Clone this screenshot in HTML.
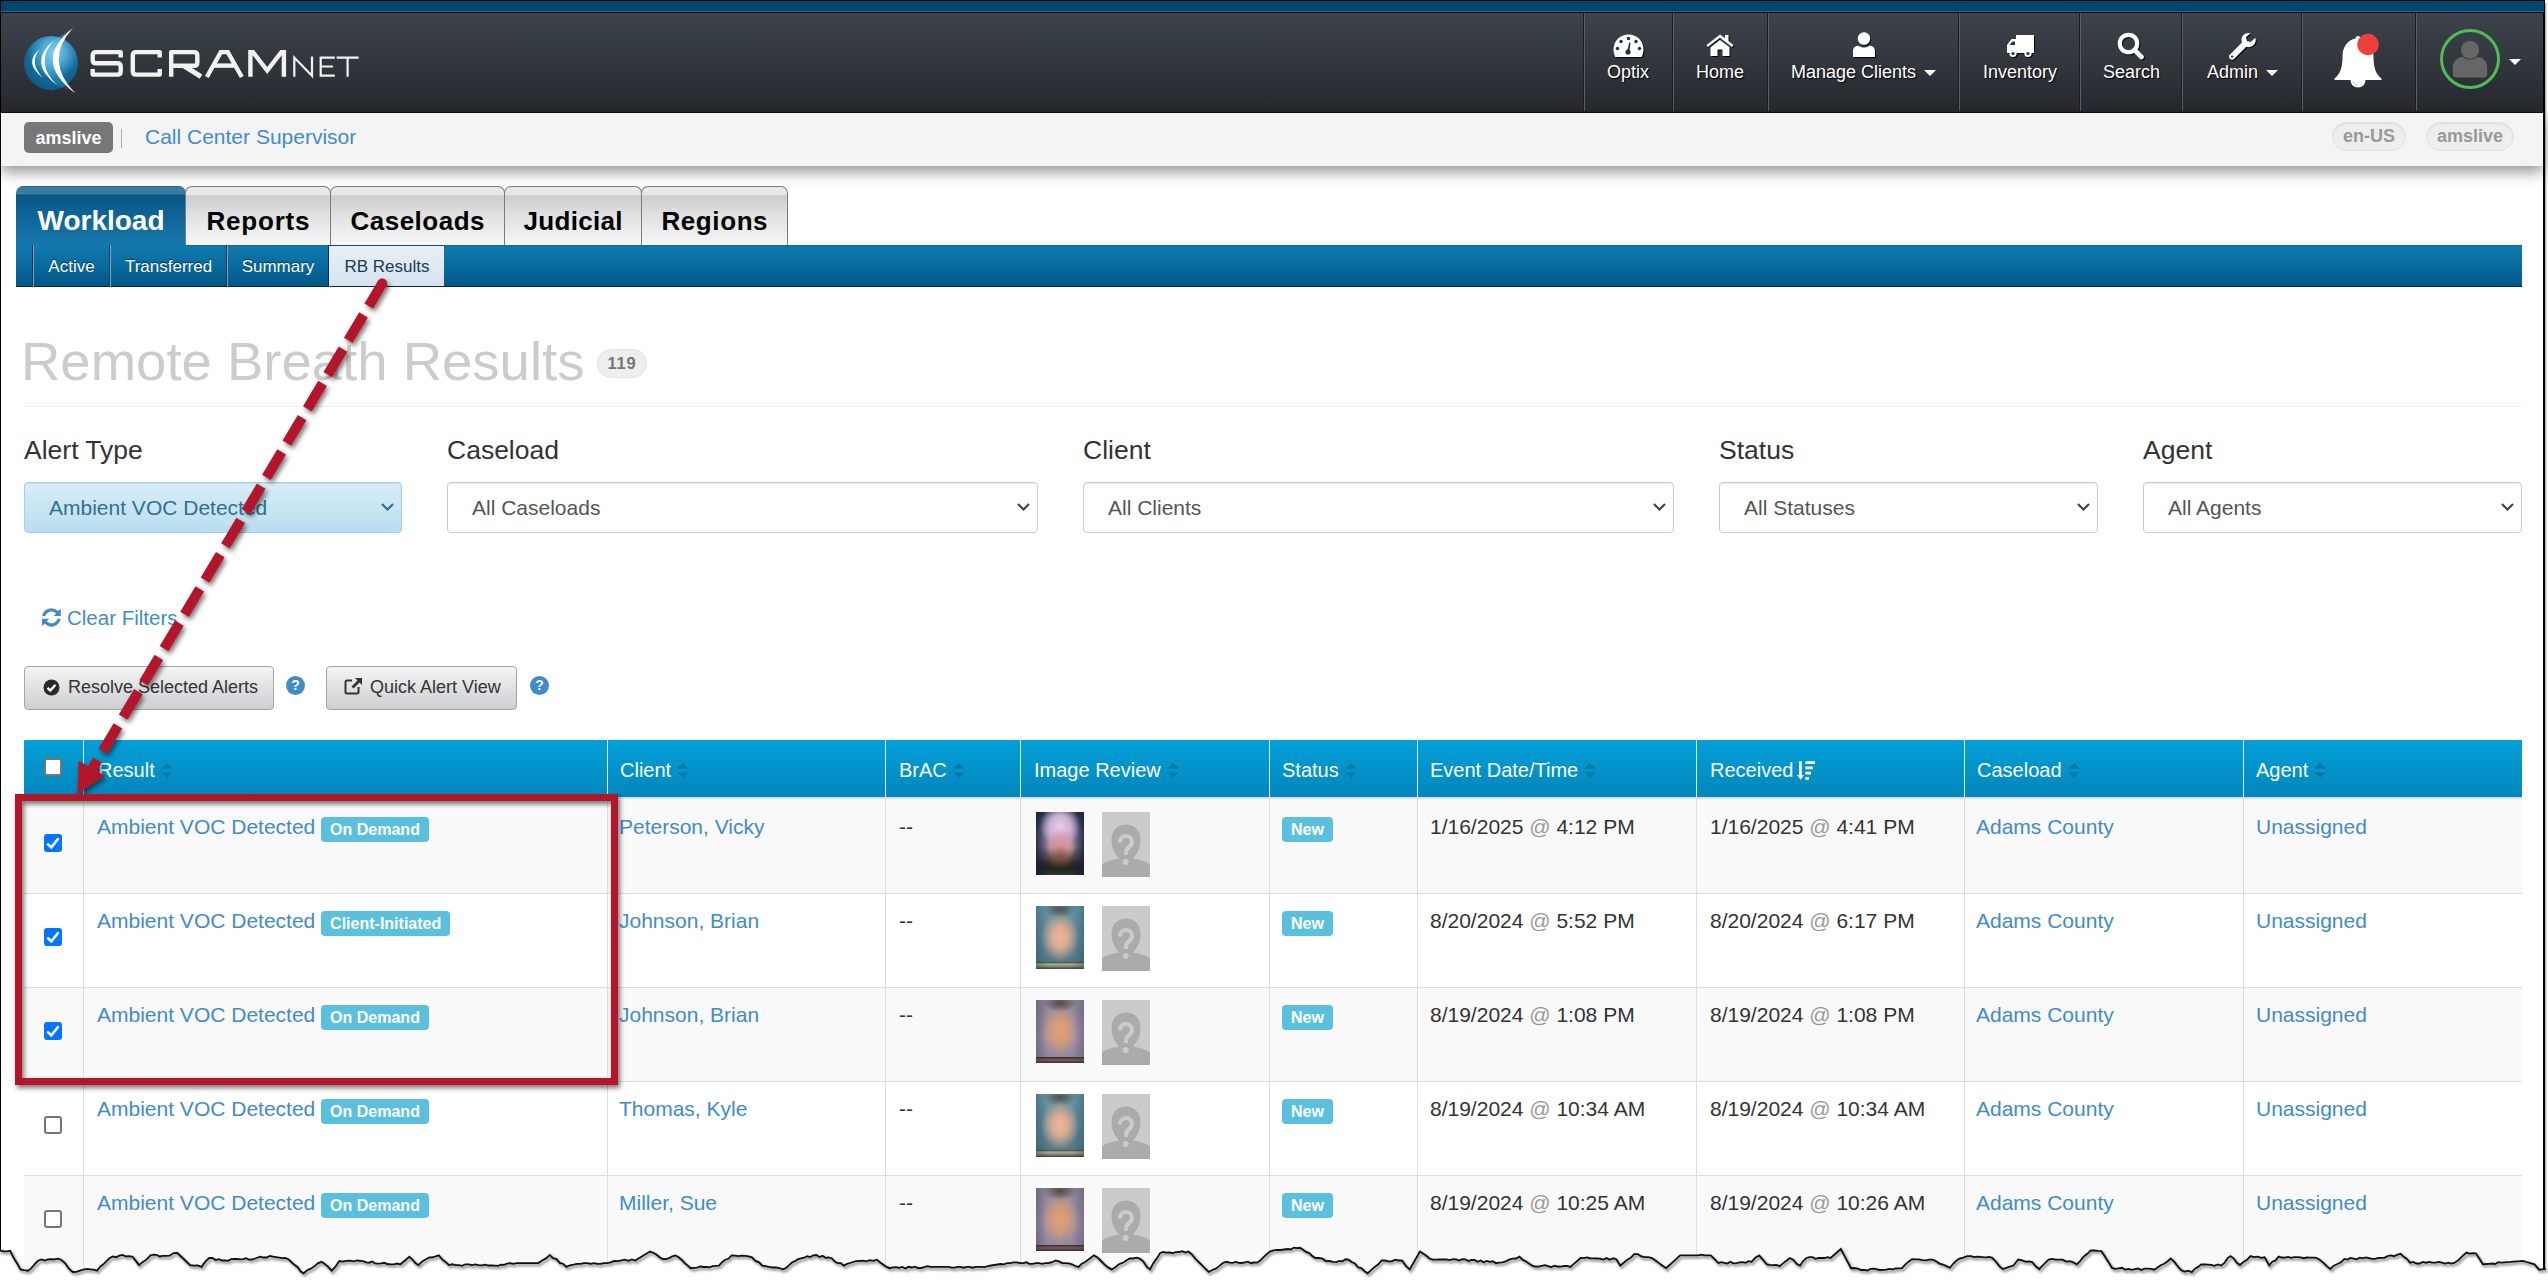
<!DOCTYPE html><html><head><meta charset="utf-8"><title>SCRAMNET</title><style>
*{box-sizing:border-box}
html,body{margin:0;padding:0}
body{width:2548px;height:1283px;position:relative;overflow:hidden;background:#fff;font-family:"Liberation Sans",sans-serif;color:#333}
.a{position:absolute}
.nw{white-space:nowrap}
.navtxt{position:absolute;color:#fff;font-size:18px;line-height:18px;white-space:nowrap;text-shadow:1px 1px 1px #000}
.navdiv{position:absolute;top:13px;height:98px;width:2px;border-left:1px solid #1b1d21;border-right:1px solid #5a5f66}
.caret{position:absolute;width:0;height:0;border-left:6px solid transparent;border-right:6px solid transparent;border-top:6px solid #fff}
.tab{position:absolute;top:186px;height:59px;border:1px solid #7c7c7c;border-bottom:none;border-radius:7px 7px 0 0;background:linear-gradient(#ececec 0,#e4e4e4 8px,#cdcdcd 9px,#e2e2e2 30px,#f7f7f7 58px);font-weight:bold;font-size:26px;color:#000;text-align:center;line-height:68px;white-space:nowrap}
.sub{position:absolute;top:245px;height:42px;color:#fff;font-size:17px;line-height:43px;text-align:center;white-space:nowrap;text-shadow:0 -1px 1px #03314f}
.sdiv{position:absolute;top:245px;height:42px;width:2px;border-left:1px solid #04304f;border-right:1px solid #6fadd2}
.lbl{position:absolute;top:435px;font-size:26.5px;line-height:30px;color:#333;white-space:nowrap}
.sel{position:absolute;top:482px;height:51px;border:1px solid #ccc;border-radius:4px;background:#fff;font-size:21px;line-height:49px;color:#555;padding-left:24px;white-space:nowrap;box-shadow:inset 0 1px 1px rgba(0,0,0,.075)}
.chev{position:absolute;top:20px;width:13px;height:8px}
.btn{position:absolute;top:666px;height:44px;border:1px solid #a6a6a6;border-radius:4px;background:linear-gradient(#f5f5f5,#e3e3e4 45%,#cdced2);font-size:18px;line-height:40px;color:#333;white-space:nowrap}
.help{position:absolute;top:676px;width:19px;height:19px;border-radius:50%;background:#428bca;color:#fff;font-weight:bold;font-size:14px;line-height:19px;text-align:center}
.th{position:absolute;top:741px;height:57px;color:#fff;font-size:20px;line-height:59px;white-space:nowrap}
.thd{position:absolute;top:740px;height:57px;width:1px;background:#d9eef7}
.sort{display:inline-block;vertical-align:baseline;margin-left:6px;width:12px;height:16px;position:relative;top:2px}
.row{position:absolute;left:24px;width:2498px;height:94px;border-top:1px solid #ddd}
.td{position:absolute;font-size:21px;line-height:24px;white-space:nowrap}
.lnk{color:#428bca}
.lab{display:inline-block;background:#5bc0de;color:#fff;font-weight:bold;font-size:16px;line-height:25px;height:25px;padding:0 9px;border-radius:4px;vertical-align:top;position:relative;top:2px}
.cb{position:absolute;left:20px;width:18px;height:18px;border-radius:3px}
.cbo{border:2px solid #767676;background:#fff}
.cbc{background:#0075ff}
.tdd{position:absolute;top:0;height:94px;width:1px;background:#ddd}
.photo{position:absolute;width:48px;height:63px}
.ph{position:absolute;width:48px;height:65px;background:#cbcbcb;overflow:hidden}
</style></head><body>
<div class="a" style="left:0;top:0;width:2545px;height:1px;background:#000"></div>
<div class="a" style="left:0;top:0;width:1px;height:1251px;background:#000"></div>
<div class="a" style="left:2543px;top:0;width:2px;height:1269px;background:#000"></div>
<div class="a" style="left:2545px;top:3px;width:3px;height:1267px;background:linear-gradient(90deg,#9a9a9a,#e6e6e6,#fff)"></div>
<div class="a" style="left:1px;top:1px;width:2543px;height:10px;background:#01466b"></div>
<div class="a" style="left:1px;top:11px;width:2543px;height:1px;background:#0a71a9"></div>
<div class="a" style="left:1px;top:12px;width:2542px;height:1px;background:#000"></div>
<div class="a" style="left:1px;top:13px;width:2542px;height:99px;background:linear-gradient(#3d434c,#33383f 45%,#25282d)"></div>
<div class="a" style="left:1px;top:112px;width:2542px;height:1px;background:#0b0c0e"></div>
<svg class="a" style="left:18px;top:24px" width="70" height="76" viewBox="0 0 70 76">
<defs><radialGradient id="gl" cx="0.55" cy="0.3" r="0.8"><stop offset="0" stop-color="#8fd0ec"/><stop offset="0.3" stop-color="#4ba5cf"/><stop offset="0.6" stop-color="#12699a"/><stop offset="1" stop-color="#0a5380"/></radialGradient>
<linearGradient id="gl2" x1="0" y1="0" x2="1" y2="1"><stop offset="0" stop-color="#64c9f2" stop-opacity="0.9"/><stop offset="1" stop-color="#64c9f2" stop-opacity="0"/></linearGradient></defs>
<circle cx="33" cy="39" r="27" fill="url(#gl)"/>
<path d="M35.7 16.6 Q8.8 39 39.4 61.5 L57.5 69.6 Q13.2 36.2 55 4Z" fill="url(#gl2)" opacity="0.6"/>
<path d="M55 4 Q13.2 36.2 57.5 69.6 Q25.2 36.2 55 4Z" fill="#fff"/>
<path d="M35.7 16.6 Q8.8 39 39.4 61.5 Q15.8 39 35.7 16.6Z" fill="#fff"/>
<path d="M22 25.3 Q4.7 38.4 25 54 Q10.3 38.4 22 25.3Z" fill="#fff"/>
</svg>
<svg class="a" style="left:0;top:0" width="380" height="100" viewBox="0 0 380 100"><g fill="none" stroke="#f2f2f2" stroke-width="4.4" stroke-linejoin="round">
<path d="M120.7 57.6 L120.7 52.1 L96 52.1 Q92.7 52.1 92.7 55.4 L92.7 60 Q92.7 63.3 96 63.3 L117.4 63.3 Q120.7 63.3 120.7 66.6 L120.7 71.3 Q120.7 74.6 117.4 74.6 L92.7 74.6 L92.7 69"/>
<path d="M159.7 57.6 L159.7 52.1 L136.1 52.1 Q132.8 52.1 132.8 55.4 L132.8 71.3 Q132.8 74.6 136.1 74.6 L159.7 74.6 L159.7 69"/>
<path d="M171.2 76.8 L171.2 52.1 L194 52.1 Q197.3 52.1 197.3 55.4 L197.3 62.5 Q197.3 65.8 194 65.8 L171.2 65.8"/><path d="M184 65.8 L201 76.6" stroke-width="5"/>
<path d="M206.8 77 L220.8 52.1 L227.8 52.1 L241.8 77" stroke-linejoin="miter"/><path d="M214.5 65.6 L234.2 65.6"/>
<path d="M250.4 76.8 L250.4 52.1 L253 52.1 L267.2 70.5 L281.4 52.1 L283.9 52.1 L283.9 76.8" stroke-linejoin="miter"/>
</g><g fill="none" stroke="#f2f2f2" stroke-width="2.2" stroke-linejoin="miter">
<path d="M294.3 76.8 L294.3 57.6 L312 75.8 L312 56.5"/>
<path d="M334.8 57.6 L320.7 57.6 L320.7 75.7 L334.8 75.7 M320.7 66.5 L333 66.5"/>
<path d="M336.6 57.6 L358.6 57.6 M347.6 57.6 L347.6 76.8"/>
</g></svg>
<div class="navdiv" style="left:1583px"></div>
<div class="navdiv" style="left:1672px"></div>
<div class="navdiv" style="left:1767px"></div>
<div class="navdiv" style="left:1958px"></div>
<div class="navdiv" style="left:2079px"></div>
<div class="navdiv" style="left:2181px"></div>
<div class="navdiv" style="left:2301px"></div>
<div class="navdiv" style="left:2415px"></div>
<svg class="a" style="left:1613px;top:34px;filter:drop-shadow(1px 1px 0.6px rgba(0,0,0,.9))" width="31" height="24" viewBox="0 0 31 24">
<path d="M15.5 0.5 C7 0.5 0.5 7 0.5 15.5 C0.5 18 1.2 20.5 2.3 23 L28.7 23 C29.8 20.5 30.5 18 30.5 15.5 C30.5 7 24 0.5 15.5 0.5Z" fill="#fff"/>
<g fill="#2b2f35"><circle cx="15.5" cy="4.5" r="1.7"/><circle cx="8" cy="7.5" r="1.7"/><circle cx="23" cy="7.5" r="1.7"/><circle cx="4.5" cy="14.5" r="1.7"/><circle cx="26.5" cy="14.5" r="1.7"/><circle cx="15" cy="18" r="2.6"/><path d="M14 17 L16.3 8.5 L17.6 8.8 L16.2 18Z"/></g></svg>
<svg class="a" style="left:1706px;top:34px;filter:drop-shadow(1px 1px 0.6px rgba(0,0,0,.9))" width="28" height="23" viewBox="0 0 28 23">
<path d="M14 0.5 L0.5 11 L2 13 L14 3.8 L26 13 L27.5 11 L22.5 7 L22.5 1 L19 1 L19 4.3Z" fill="#fff"/>
<path d="M14 6 L4.5 13.3 L4.5 22 L11.5 22 L11.5 15.5 L16.5 15.5 L16.5 22 L23.5 22 L23.5 13.3Z" fill="#fff"/></svg>
<svg class="a" style="left:1852px;top:32px;filter:drop-shadow(1px 1px 0.6px rgba(0,0,0,.9))" width="24" height="26" viewBox="0 0 24 26">
<circle cx="12" cy="6.5" r="6.3" fill="#fff"/><path d="M1 25 L1 19 C1 15.5 3.5 13.8 6.5 13.8 C8 15 10 15.6 12 15.6 C14 15.6 16 15 17.5 13.8 C20.5 13.8 23 15.5 23 19 L23 25Z" fill="#fff"/></svg>
<svg class="a" style="left:2006px;top:34px;filter:drop-shadow(1px 1px 0.6px rgba(0,0,0,.9))" width="29" height="24" viewBox="0 0 29 24">
<path d="M10 1 L28 1 L28 19 L1 19 L1 11 L5.5 5 L10 5Z" fill="#fff"/><path d="M3.5 11 L6.5 7.5 L9 7.5 L9 11Z" fill="#2e3238"/>
<circle cx="7" cy="19.5" r="3.6" fill="#fff"/><circle cx="7" cy="19.5" r="1.6" fill="#2e3238"/><circle cx="22" cy="19.5" r="3.6" fill="#fff"/><circle cx="22" cy="19.5" r="1.6" fill="#2e3238"/></svg>
<svg class="a" style="left:2117px;top:32px;filter:drop-shadow(1px 1px 0.6px rgba(0,0,0,.9))" width="29" height="28" viewBox="0 0 29 28">
<circle cx="11.5" cy="11.5" r="8.7" fill="none" stroke="#fff" stroke-width="4.2"/><path d="M17.5 18 L24.5 25" stroke="#fff" stroke-width="4.6" stroke-linecap="round"/></svg>
<svg class="a" style="left:2228px;top:32px;filter:drop-shadow(1px 1px 0.6px rgba(0,0,0,.9))" width="29" height="28" viewBox="0 0 29 28">
<path d="M20.5 1 C16.5 1 13.5 4 13.5 8 C13.5 9 13.7 9.8 14 10.6 L2 22.5 C0.8 23.7 0.8 25.6 2 26.8 C3.2 28 5.1 28 6.3 26.8 L18.3 14.8 C19 15.1 19.8 15.2 20.6 15.2 C24.6 15.2 27.7 12 27.7 8.1 C27.7 7.2 27.5 6.4 27.3 5.7 L22.8 10 L19 9 L18 5.2 L22.5 1.2 C21.8 1.1 21.2 1 20.5 1Z" fill="#fff"/><circle cx="4.2" cy="24.6" r="1.2" fill="#2e3238"/></svg>
<svg class="a" style="left:2330px;top:32px" width="56" height="58" viewBox="0 0 56 58">
<g style="filter:drop-shadow(0.5px 0.5px 0.5px rgba(0,0,0,.6))"><path d="M28 4 C26.3 4 25.5 5 25.5 6.5 C17.5 8 12.5 15 12.5 24 C12.5 36 10 42 5 46 C3.5 47.5 4.5 48 6 48 L50 48 C51.5 48 52.5 47.5 51 46 C46 42 43.5 36 43.5 24 C43.5 15 38.5 8 30.5 6.5 C30.5 5 29.7 4 28 4Z" fill="#fff"/>
<path d="M20.5 48 C20.5 52.5 23.8 55.5 28 55.5 C32.2 55.5 35.5 52.5 35.5 48Z" fill="#fff"/><path d="M23 49.5 C23.5 52 25.5 53.5 28 53.8" fill="none" stroke="#9aa" stroke-width="0.8"/></g>
<circle cx="38" cy="12.5" r="10.7" fill="#f0403b"/></svg>
<svg class="a" style="left:2438px;top:27px" width="64" height="64" viewBox="0 0 64 64">
<circle cx="32" cy="32" r="28.5" fill="none" stroke="#52bb55" stroke-width="3"/>
<circle cx="32" cy="22.8" r="9.1" fill="#666"/><path d="M14.8 47 L14.8 41 C14.8 34 19 30 25 30 C27 31.8 29.3 32.6 32 32.6 C34.7 32.6 37 31.8 39 30 C45 30 49.2 34 49.2 41 L49.2 47 C49.2 49 48 50.4 46 50.4 L18 50.4 C16 50.4 14.8 49 14.8 47Z" fill="#666"/></svg>
<div class="navtxt" style="left:1607px;top:63px">Optix</div>
<div class="navtxt" style="left:1696px;top:63px">Home</div>
<div class="navtxt" style="left:1791px;top:63px">Manage Clients</div>
<div class="navtxt" style="left:1983px;top:63px">Inventory</div>
<div class="navtxt" style="left:2103px;top:63px">Search</div>
<div class="navtxt" style="left:2207px;top:63px">Admin</div>
<div class="caret" style="left:1924px;top:70px"></div>
<div class="caret" style="left:2266px;top:70px"></div>
<div class="caret" style="left:2509px;top:59px"></div>
<div class="a" style="left:1px;top:113px;width:2542px;height:53px;background:#f4f4f4;box-shadow:0 6px 14px rgba(0,0,0,.42);z-index:2"></div>
<div class="a" style="left:24px;top:122px;width:89px;height:31px;background:#777;border-radius:5px;color:#fff;font-weight:bold;font-size:18px;line-height:33px;text-align:center;z-index:3">amslive</div>
<div class="a" style="left:121px;top:129px;width:1px;height:19px;background:#aaa;z-index:3"></div>
<div class="a nw" style="left:145px;top:124px;font-size:21px;line-height:26px;color:#428bca;z-index:3">Call Center Supervisor</div>
<div class="a" style="left:2332px;top:122px;width:74px;height:29px;background:#eee;border:1px solid #e2e2e2;border-radius:15px;box-shadow:inset 0 1px 2px rgba(0,0,0,.08);color:#999;font-weight:bold;font-size:18px;line-height:27px;text-align:center;z-index:3">en-US</div>
<div class="a" style="left:2426px;top:122px;width:88px;height:29px;background:#eee;border:1px solid #e2e2e2;border-radius:15px;box-shadow:inset 0 1px 2px rgba(0,0,0,.08);color:#999;font-weight:bold;font-size:18px;line-height:27px;text-align:center;z-index:3">amslive</div>
<div class="a" style="left:16px;top:186px;width:170px;height:60px;border-radius:7px 7px 0 0;background:linear-gradient(#0b4d74 0,#3b7ea3 1px,#3a7b9f 8px,#0a5682 9px,#0d6193 25px,#1677ab 59px);color:#fff;font-weight:bold;font-size:28px;line-height:70px;text-align:center;padding-right:0px">Workload</div>
<div class="tab" style="left:185px;width:146px;letter-spacing:0.8px;text-indent:0.8px">Reports</div>
<div class="tab" style="left:330px;width:175px;letter-spacing:0.5px;text-indent:0.5px">Caseloads</div>
<div class="tab" style="left:504px;width:138px;letter-spacing:0.3px;text-indent:0.3px">Judicial</div>
<div class="tab" style="left:641px;width:147px;letter-spacing:0.6px;text-indent:0.6px">Regions</div>
<div class="a" style="left:16px;top:245px;width:2506px;height:42px;background:linear-gradient(#0b68a0 0,#1079ab 2px,#0a6c9f 45%,#025a89 92%,#02507c)"></div>
<div class="a" style="left:16px;top:286px;width:2506px;height:1px;background:#022a45"></div><div class="a" style="left:16px;top:245px;width:169px;height:2px;background:#1179ac"></div>
<div class="sdiv" style="left:32px"></div>
<div class="sdiv" style="left:109px"></div>
<div class="sdiv" style="left:226px"></div>
<div class="sdiv" style="left:328px"></div>
<div class="a" style="left:329px;top:245px;width:115px;height:41px;background:linear-gradient(#e8eff6,#d6e3ef);border-top:1px solid #0a4c74"></div>
<div class="sub" style="left:34px;width:75px">Active</div>
<div class="sub" style="left:111px;width:115px">Transferred</div>
<div class="sub" style="left:228px;width:100px">Summary</div>
<div class="sub" style="left:330px;width:114px;color:#203a52;text-shadow:none">RB Results</div>
<div class="a nw" style="left:21px;top:332px;font-size:54.5px;line-height:60px;color:#ccc">Remote Breath Results</div>
<div class="a" style="left:597px;top:349px;width:50px;height:29px;background:#eee;border:1px solid #e3e3e3;border-radius:14px;color:#777;font-weight:bold;font-size:16.5px;letter-spacing:0.8px;line-height:27px;text-align:center">119</div>
<div class="a" style="left:24px;top:406px;width:2498px;height:1px;background:#eee"></div>
<div class="lbl" style="left:24px">Alert Type</div>
<div class="lbl" style="left:447px">Caseload</div>
<div class="lbl" style="left:1083px">Client</div>
<div class="lbl" style="left:1719px">Status</div>
<div class="lbl" style="left:2143px">Agent</div>
<div class="sel" style="left:24px;width:378px;border-color:#9fd1ea;background:linear-gradient(#d9edf7,#b9def0);color:#31708f">Ambient VOC Detected<svg class="chev" style="right:7px" viewBox="0 0 13 8"><path d="M1 1 L6.5 6.5 L12 1" fill="none" stroke="#31708f" stroke-width="2.2"/></svg></div>
<div class="sel" style="left:447px;width:591px">All Caseloads<svg class="chev" style="right:7px" viewBox="0 0 13 8"><path d="M1 1 L6.5 6.5 L12 1" fill="none" stroke="#444" stroke-width="2.2"/></svg></div>
<div class="sel" style="left:1083px;width:591px">All Clients<svg class="chev" style="right:7px" viewBox="0 0 13 8"><path d="M1 1 L6.5 6.5 L12 1" fill="none" stroke="#444" stroke-width="2.2"/></svg></div>
<div class="sel" style="left:1719px;width:379px">All Statuses<svg class="chev" style="right:7px" viewBox="0 0 13 8"><path d="M1 1 L6.5 6.5 L12 1" fill="none" stroke="#444" stroke-width="2.2"/></svg></div>
<div class="sel" style="left:2143px;width:379px">All Agents<svg class="chev" style="right:7px" viewBox="0 0 13 8"><path d="M1 1 L6.5 6.5 L12 1" fill="none" stroke="#444" stroke-width="2.2"/></svg></div>
<svg class="a" style="left:42px;top:608px" width="19" height="19" viewBox="0 0 19 19"><g fill="#428bca">
<path d="M0.2 8 A9.3 9.3 0 0 1 16 3 L18.8 0.8 L18.8 8 L11.8 8 L14 5.6 A6.2 6.2 0 0 0 3.4 8 Z"/>
<path d="M18.6 10.8 A9.3 9.3 0 0 1 2.8 15.8 L0 18 L0 10.8 L7 10.8 L4.8 13.2 A6.2 6.2 0 0 0 15.4 10.8 Z"/></g></svg>
<div class="a nw" style="left:67px;top:606px;font-size:20.5px;line-height:24px;color:#428bca">Clear Filters</div>
<div class="btn" style="left:24px;width:250px"><svg class="a" style="left:18px;top:12px" width="17" height="17" viewBox="0 0 17 17"><circle cx="8.5" cy="8.5" r="8" fill="#2a2a2a"/><path d="M4.5 8.8 L7.3 11.5 L12.5 5.8" fill="none" stroke="#fff" stroke-width="2.3"/></svg><span class="a" style="left:43px;top:0">Resolve Selected Alerts</span></div>
<div class="btn" style="left:326px;width:191px"><svg class="a" style="left:17px;top:10px" width="19" height="18" viewBox="0 0 19 18"><path d="M8 3.5 L3 3.5 C2 3.5 1.5 4 1.5 5 L1.5 15 C1.5 16 2 16.5 3 16.5 L13 16.5 C14 16.5 14.5 16 14.5 15 L14.5 10" fill="none" stroke="#333" stroke-width="2"/><path d="M11 1 L18 1 L18 8 L15.5 5.5 L9.5 11.5 L7.5 9.5 L13.5 3.5Z" fill="#333"/></svg><span class="a" style="left:43px;top:0">Quick Alert View</span></div>
<div class="help" style="left:286px">?</div>
<div class="help" style="left:530px">?</div>
<div class="a" style="left:24px;top:740px;width:2498px;height:57px;background:linear-gradient(#03a0d9,#0386bb)"></div>
<div class="a" style="left:24px;top:797px;width:2498px;height:2px;background:#ddd"></div>
<div class="thd" style="left:83px"></div>
<div class="thd" style="left:607px"></div>
<div class="thd" style="left:885px"></div>
<div class="thd" style="left:1020px"></div>
<div class="thd" style="left:1269px"></div>
<div class="thd" style="left:1417px"></div>
<div class="thd" style="left:1696px"></div>
<div class="thd" style="left:1964px"></div>
<div class="thd" style="left:2243px"></div>
<div class="th" style="left:98px">Result<svg class="sort" viewBox="0 0 11 15"><path d="M5.5 0 L11 5.5 L0 5.5Z M0 9 L11 9 L5.5 14.5Z" fill="#0377a0"/><path d="M0.5 9.6 L5.5 14.6 L10.5 9.6 M0.3 6.2 L10.7 6.2" fill="none" stroke="#08a0da" stroke-width="0.8" opacity="0.7"/></svg></div>
<div class="th" style="left:620px">Client<svg class="sort" viewBox="0 0 11 15"><path d="M5.5 0 L11 5.5 L0 5.5Z M0 9 L11 9 L5.5 14.5Z" fill="#0377a0"/><path d="M0.5 9.6 L5.5 14.6 L10.5 9.6 M0.3 6.2 L10.7 6.2" fill="none" stroke="#08a0da" stroke-width="0.8" opacity="0.7"/></svg></div>
<div class="th" style="left:899px">BrAC<svg class="sort" viewBox="0 0 11 15"><path d="M5.5 0 L11 5.5 L0 5.5Z M0 9 L11 9 L5.5 14.5Z" fill="#0377a0"/><path d="M0.5 9.6 L5.5 14.6 L10.5 9.6 M0.3 6.2 L10.7 6.2" fill="none" stroke="#08a0da" stroke-width="0.8" opacity="0.7"/></svg></div>
<div class="th" style="left:1034px">Image Review<svg class="sort" viewBox="0 0 11 15"><path d="M5.5 0 L11 5.5 L0 5.5Z M0 9 L11 9 L5.5 14.5Z" fill="#0377a0"/><path d="M0.5 9.6 L5.5 14.6 L10.5 9.6 M0.3 6.2 L10.7 6.2" fill="none" stroke="#08a0da" stroke-width="0.8" opacity="0.7"/></svg></div>
<div class="th" style="left:1282px">Status<svg class="sort" viewBox="0 0 11 15"><path d="M5.5 0 L11 5.5 L0 5.5Z M0 9 L11 9 L5.5 14.5Z" fill="#0377a0"/><path d="M0.5 9.6 L5.5 14.6 L10.5 9.6 M0.3 6.2 L10.7 6.2" fill="none" stroke="#08a0da" stroke-width="0.8" opacity="0.7"/></svg></div>
<div class="th" style="left:1430px">Event Date/Time<svg class="sort" viewBox="0 0 11 15"><path d="M5.5 0 L11 5.5 L0 5.5Z M0 9 L11 9 L5.5 14.5Z" fill="#0377a0"/><path d="M0.5 9.6 L5.5 14.6 L10.5 9.6 M0.3 6.2 L10.7 6.2" fill="none" stroke="#08a0da" stroke-width="0.8" opacity="0.7"/></svg></div>
<div class="th" style="left:1977px">Caseload<svg class="sort" viewBox="0 0 11 15"><path d="M5.5 0 L11 5.5 L0 5.5Z M0 9 L11 9 L5.5 14.5Z" fill="#0377a0"/><path d="M0.5 9.6 L5.5 14.6 L10.5 9.6 M0.3 6.2 L10.7 6.2" fill="none" stroke="#08a0da" stroke-width="0.8" opacity="0.7"/></svg></div>
<div class="th" style="left:2256px">Agent<svg class="sort" viewBox="0 0 11 15"><path d="M5.5 0 L11 5.5 L0 5.5Z M0 9 L11 9 L5.5 14.5Z" fill="#0377a0"/><path d="M0.5 9.6 L5.5 14.6 L10.5 9.6 M0.3 6.2 L10.7 6.2" fill="none" stroke="#08a0da" stroke-width="0.8" opacity="0.7"/></svg></div>
<div class="th" style="left:1710px">Received<svg class="sort" viewBox="0 0 20 20" style="width:20px;height:20px;margin-left:3px;top:3px"><path d="M4.4 1.3 L4.4 16" stroke="#fff" stroke-width="2.8" fill="none"/><path d="M1 15 L8 15 L4.5 19.8Z" fill="#fff"/><path d="M9.3 2.7 L18.9 2.7 M9.3 7.9 L16.9 7.9 M9.3 13.2 L15 13.2 M9.3 18.4 L13 18.4" stroke="#fff" stroke-width="2.8"/></svg></div>
<div class="a" style="left:44px;top:758px;width:18px;height:18px;border:2px solid #767676;border-radius:3px;background:#fff"></div>
<div class="a" style="left:24px;top:799px;width:2498px;height:94px;background:#f9f9f9">
<div class="tdd" style="left:59px"></div>
<div class="tdd" style="left:583px"></div>
<div class="tdd" style="left:861px"></div>
<div class="tdd" style="left:996px"></div>
<div class="tdd" style="left:1245px"></div>
<div class="tdd" style="left:1393px"></div>
<div class="tdd" style="left:1672px"></div>
<div class="tdd" style="left:1940px"></div>
<div class="tdd" style="left:2219px"></div>
<div class="a" style="left:0;top:0;width:2498px;height:94px;transform:translateY(0px)">
<div class="cb cbc" style="top:35px"><svg width="18" height="18" viewBox="0 0 18 18"><path d="M3.2 9.6 L7.3 13.3 L14.6 4.3" fill="none" stroke="#fff" stroke-width="2.6"/></svg></div>
<div class="td lnk" style="left:73px;top:16px">Ambient VOC Detected <span class="lab">On Demand</span></div>
<div class="td lnk" style="left:595px;top:16px">Peterson, Vicky</div>
<div class="td" style="left:875px;top:16px">--</div>
<div class="photo" style="left:1012px;top:13px;background:radial-gradient(ellipse 14px 12px at 24px 45px,rgba(130,80,60,.9),rgba(130,80,60,0) 100%),radial-gradient(ellipse 16px 16px at 25px 33px,#d9959a 0%,rgba(215,150,160,.85) 45%,rgba(200,150,190,0) 100%),radial-gradient(ellipse 20px 22px at 24px 14px,#e8cbe6 0%,rgba(215,185,220,.9) 50%,rgba(160,140,190,0) 100%),linear-gradient(90deg,rgba(20,30,50,.85),rgba(20,30,50,0) 30%,rgba(20,30,50,0) 70%,rgba(20,30,50,.85)),linear-gradient(#2f3a4e,#9d8fb8 30%,#a78aa8 55%,#3a3030 80%,#22251f 90%,#2d3a2c);background-size:100% 100%,100% 100%,100% 100%,100% 100%,100% 100%"></div>
<div class="ph" style="left:1078px;top:13px"><svg width="48" height="65" viewBox="0 0 48 65"><path d="M24 12.5 C15 12.5 9.5 19 9.5 28 C9.5 36 13 42 17 46.5 C8 48 0 51 0 53 L0 65 L48 65 L48 53 C48 51 40 48 31 46.5 C35 42 38.5 36 38.5 28 C38.5 19 33 12.5 24 12.5Z" fill="#ababab"/><path d="M18 30.5 C18 26.5 20.5 24 24 24 C27.5 24 30 26.5 30 30 C30 33.5 27 35 25.5 36.5 C24.5 37.5 24 39 24 43" fill="none" stroke="#cbcbcb" stroke-width="4.2"/><circle cx="23.8" cy="50" r="2.9" fill="#cbcbcb"/></svg></div>
<div class="td" style="left:1258px;top:16px"><span class="lab">New</span></div>
<div class="td" style="left:1406px;top:16px">1/16/2025 <span style="color:#999">@</span> 4:12 PM</div>
<div class="td" style="left:1686px;top:16px">1/16/2025 <span style="color:#999">@</span> 4:41 PM</div>
<div class="td lnk" style="left:1952px;top:16px">Adams County</div>
<div class="td lnk" style="left:2232px;top:16px">Unassigned</div>
</div></div>
<div class="a" style="left:24px;top:893px;width:2498px;height:94px;background:#fff;border-top:1px solid #ddd">
<div class="tdd" style="left:59px"></div>
<div class="tdd" style="left:583px"></div>
<div class="tdd" style="left:861px"></div>
<div class="tdd" style="left:996px"></div>
<div class="tdd" style="left:1245px"></div>
<div class="tdd" style="left:1393px"></div>
<div class="tdd" style="left:1672px"></div>
<div class="tdd" style="left:1940px"></div>
<div class="tdd" style="left:2219px"></div>
<div class="a" style="left:0;top:0;width:2498px;height:94px;transform:translateY(0px)">
<div class="cb cbc" style="top:34px"><svg width="18" height="18" viewBox="0 0 18 18"><path d="M3.2 9.6 L7.3 13.3 L14.6 4.3" fill="none" stroke="#fff" stroke-width="2.6"/></svg></div>
<div class="td lnk" style="left:73px;top:15px">Ambient VOC Detected <span class="lab">Client-Initiated</span></div>
<div class="td lnk" style="left:595px;top:15px">Johnson, Brian</div>
<div class="td" style="left:875px;top:15px">--</div>
<div class="photo" style="left:1012px;top:12px;background:radial-gradient(ellipse 17px 9px at 24px 3px,rgba(70,60,45,.75),rgba(70,60,45,0)),radial-gradient(ellipse 19px 25px at 24px 31px,#e9b89e 0%,#dcab92 40%,rgba(150,150,140,0) 100%),linear-gradient(90deg,rgba(30,60,80,.35),rgba(30,60,80,0) 25%,rgba(30,60,80,0) 75%,rgba(30,60,80,.35)),linear-gradient(#34402f 0,#a9ae94 2px,#8b917a 4px,#3c4636 7px),linear-gradient(#6a98a6,#5d8796 60%,#4f7180);background-size:100% 100%,100% 100%,100% 100%,100% 7px,100% 100%;background-position:0 0,0 0,0 0,0 bottom,0 0;background-repeat:no-repeat"></div>
<div class="ph" style="left:1078px;top:12px"><svg width="48" height="65" viewBox="0 0 48 65"><path d="M24 12.5 C15 12.5 9.5 19 9.5 28 C9.5 36 13 42 17 46.5 C8 48 0 51 0 53 L0 65 L48 65 L48 53 C48 51 40 48 31 46.5 C35 42 38.5 36 38.5 28 C38.5 19 33 12.5 24 12.5Z" fill="#ababab"/><path d="M18 30.5 C18 26.5 20.5 24 24 24 C27.5 24 30 26.5 30 30 C30 33.5 27 35 25.5 36.5 C24.5 37.5 24 39 24 43" fill="none" stroke="#cbcbcb" stroke-width="4.2"/><circle cx="23.8" cy="50" r="2.9" fill="#cbcbcb"/></svg></div>
<div class="td" style="left:1258px;top:15px"><span class="lab">New</span></div>
<div class="td" style="left:1406px;top:15px">8/20/2024 <span style="color:#999">@</span> 5:52 PM</div>
<div class="td" style="left:1686px;top:15px">8/20/2024 <span style="color:#999">@</span> 6:17 PM</div>
<div class="td lnk" style="left:1952px;top:15px">Adams County</div>
<div class="td lnk" style="left:2232px;top:15px">Unassigned</div>
</div></div>
<div class="a" style="left:24px;top:987px;width:2498px;height:94px;background:#f9f9f9;border-top:1px solid #ddd">
<div class="tdd" style="left:59px"></div>
<div class="tdd" style="left:583px"></div>
<div class="tdd" style="left:861px"></div>
<div class="tdd" style="left:996px"></div>
<div class="tdd" style="left:1245px"></div>
<div class="tdd" style="left:1393px"></div>
<div class="tdd" style="left:1672px"></div>
<div class="tdd" style="left:1940px"></div>
<div class="tdd" style="left:2219px"></div>
<div class="a" style="left:0;top:0;width:2498px;height:94px;transform:translateY(0px)">
<div class="cb cbc" style="top:34px"><svg width="18" height="18" viewBox="0 0 18 18"><path d="M3.2 9.6 L7.3 13.3 L14.6 4.3" fill="none" stroke="#fff" stroke-width="2.6"/></svg></div>
<div class="td lnk" style="left:73px;top:15px">Ambient VOC Detected <span class="lab">On Demand</span></div>
<div class="td lnk" style="left:595px;top:15px">Johnson, Brian</div>
<div class="td" style="left:875px;top:15px">--</div>
<div class="photo" style="left:1012px;top:12px;background:radial-gradient(ellipse 17px 9px at 24px 3px,rgba(70,55,45,.8),rgba(70,55,45,0)),radial-gradient(ellipse 19px 26px at 24px 31px,#dda078 0%,#d49a78 40%,rgba(150,130,150,0) 100%),linear-gradient(90deg,rgba(60,40,60,.35),rgba(60,40,60,0) 25%,rgba(60,40,60,0) 75%,rgba(60,40,60,.3)),linear-gradient(#3a2626 0,#7a6060 3px,#3d2929 6px),linear-gradient(#8e879c,#9b93ad 60%,#8d839e);background-size:100% 100%,100% 100%,100% 100%,100% 6px,100% 100%;background-position:0 0,0 0,0 0,0 bottom,0 0;background-repeat:no-repeat"></div>
<div class="ph" style="left:1078px;top:12px"><svg width="48" height="65" viewBox="0 0 48 65"><path d="M24 12.5 C15 12.5 9.5 19 9.5 28 C9.5 36 13 42 17 46.5 C8 48 0 51 0 53 L0 65 L48 65 L48 53 C48 51 40 48 31 46.5 C35 42 38.5 36 38.5 28 C38.5 19 33 12.5 24 12.5Z" fill="#ababab"/><path d="M18 30.5 C18 26.5 20.5 24 24 24 C27.5 24 30 26.5 30 30 C30 33.5 27 35 25.5 36.5 C24.5 37.5 24 39 24 43" fill="none" stroke="#cbcbcb" stroke-width="4.2"/><circle cx="23.8" cy="50" r="2.9" fill="#cbcbcb"/></svg></div>
<div class="td" style="left:1258px;top:15px"><span class="lab">New</span></div>
<div class="td" style="left:1406px;top:15px">8/19/2024 <span style="color:#999">@</span> 1:08 PM</div>
<div class="td" style="left:1686px;top:15px">8/19/2024 <span style="color:#999">@</span> 1:08 PM</div>
<div class="td lnk" style="left:1952px;top:15px">Adams County</div>
<div class="td lnk" style="left:2232px;top:15px">Unassigned</div>
</div></div>
<div class="a" style="left:24px;top:1081px;width:2498px;height:94px;background:#fff;border-top:1px solid #ddd">
<div class="tdd" style="left:59px"></div>
<div class="tdd" style="left:583px"></div>
<div class="tdd" style="left:861px"></div>
<div class="tdd" style="left:996px"></div>
<div class="tdd" style="left:1245px"></div>
<div class="tdd" style="left:1393px"></div>
<div class="tdd" style="left:1672px"></div>
<div class="tdd" style="left:1940px"></div>
<div class="tdd" style="left:2219px"></div>
<div class="a" style="left:0;top:0;width:2498px;height:94px;transform:translateY(0px)">
<div class="cb cbo" style="top:34px"></div>
<div class="td lnk" style="left:73px;top:15px">Ambient VOC Detected <span class="lab">On Demand</span></div>
<div class="td lnk" style="left:595px;top:15px">Thomas, Kyle</div>
<div class="td" style="left:875px;top:15px">--</div>
<div class="photo" style="left:1012px;top:12px;background:radial-gradient(ellipse 17px 9px at 24px 3px,rgba(70,60,45,.75),rgba(70,60,45,0)),radial-gradient(ellipse 19px 25px at 24px 31px,#e9b89e 0%,#dcab92 40%,rgba(150,150,140,0) 100%),linear-gradient(90deg,rgba(30,60,80,.35),rgba(30,60,80,0) 25%,rgba(30,60,80,0) 75%,rgba(30,60,80,.35)),linear-gradient(#34402f 0,#a9ae94 2px,#8b917a 4px,#3c4636 7px),linear-gradient(#6a98a6,#5d8796 60%,#4f7180);background-size:100% 100%,100% 100%,100% 100%,100% 7px,100% 100%;background-position:0 0,0 0,0 0,0 bottom,0 0;background-repeat:no-repeat"></div>
<div class="ph" style="left:1078px;top:12px"><svg width="48" height="65" viewBox="0 0 48 65"><path d="M24 12.5 C15 12.5 9.5 19 9.5 28 C9.5 36 13 42 17 46.5 C8 48 0 51 0 53 L0 65 L48 65 L48 53 C48 51 40 48 31 46.5 C35 42 38.5 36 38.5 28 C38.5 19 33 12.5 24 12.5Z" fill="#ababab"/><path d="M18 30.5 C18 26.5 20.5 24 24 24 C27.5 24 30 26.5 30 30 C30 33.5 27 35 25.5 36.5 C24.5 37.5 24 39 24 43" fill="none" stroke="#cbcbcb" stroke-width="4.2"/><circle cx="23.8" cy="50" r="2.9" fill="#cbcbcb"/></svg></div>
<div class="td" style="left:1258px;top:15px"><span class="lab">New</span></div>
<div class="td" style="left:1406px;top:15px">8/19/2024 <span style="color:#999">@</span> 10:34 AM</div>
<div class="td" style="left:1686px;top:15px">8/19/2024 <span style="color:#999">@</span> 10:34 AM</div>
<div class="td lnk" style="left:1952px;top:15px">Adams County</div>
<div class="td lnk" style="left:2232px;top:15px">Unassigned</div>
</div></div>
<div class="a" style="left:24px;top:1175px;width:2498px;height:94px;background:#f9f9f9;border-top:1px solid #ddd">
<div class="tdd" style="left:59px"></div>
<div class="tdd" style="left:583px"></div>
<div class="tdd" style="left:861px"></div>
<div class="tdd" style="left:996px"></div>
<div class="tdd" style="left:1245px"></div>
<div class="tdd" style="left:1393px"></div>
<div class="tdd" style="left:1672px"></div>
<div class="tdd" style="left:1940px"></div>
<div class="tdd" style="left:2219px"></div>
<div class="a" style="left:0;top:0;width:2498px;height:94px;transform:translateY(0px)">
<div class="cb cbo" style="top:34px"></div>
<div class="td lnk" style="left:73px;top:15px">Ambient VOC Detected <span class="lab">On Demand</span></div>
<div class="td lnk" style="left:595px;top:15px">Miller, Sue</div>
<div class="td" style="left:875px;top:15px">--</div>
<div class="photo" style="left:1012px;top:12px;background:radial-gradient(ellipse 17px 9px at 24px 3px,rgba(70,55,45,.8),rgba(70,55,45,0)),radial-gradient(ellipse 19px 26px at 24px 31px,#dda078 0%,#d49a78 40%,rgba(150,130,150,0) 100%),linear-gradient(90deg,rgba(60,40,60,.35),rgba(60,40,60,0) 25%,rgba(60,40,60,0) 75%,rgba(60,40,60,.3)),linear-gradient(#3a2626 0,#7a6060 3px,#3d2929 6px),linear-gradient(#8e879c,#9b93ad 60%,#8d839e);background-size:100% 100%,100% 100%,100% 100%,100% 6px,100% 100%;background-position:0 0,0 0,0 0,0 bottom,0 0;background-repeat:no-repeat"></div>
<div class="ph" style="left:1078px;top:12px"><svg width="48" height="65" viewBox="0 0 48 65"><path d="M24 12.5 C15 12.5 9.5 19 9.5 28 C9.5 36 13 42 17 46.5 C8 48 0 51 0 53 L0 65 L48 65 L48 53 C48 51 40 48 31 46.5 C35 42 38.5 36 38.5 28 C38.5 19 33 12.5 24 12.5Z" fill="#ababab"/><path d="M18 30.5 C18 26.5 20.5 24 24 24 C27.5 24 30 26.5 30 30 C30 33.5 27 35 25.5 36.5 C24.5 37.5 24 39 24 43" fill="none" stroke="#cbcbcb" stroke-width="4.2"/><circle cx="23.8" cy="50" r="2.9" fill="#cbcbcb"/></svg></div>
<div class="td" style="left:1258px;top:15px"><span class="lab">New</span></div>
<div class="td" style="left:1406px;top:15px">8/19/2024 <span style="color:#999">@</span> 10:25 AM</div>
<div class="td" style="left:1686px;top:15px">8/19/2024 <span style="color:#999">@</span> 10:26 AM</div>
<div class="td lnk" style="left:1952px;top:15px">Adams County</div>
<div class="td lnk" style="left:2232px;top:15px">Unassigned</div>
</div></div>
<svg class="a" style="left:0;top:0;z-index:10" width="2548" height="1283" viewBox="0 0 2548 1283">
<defs><filter id="ds" x="-20%" y="-20%" width="140%" height="140%"><feGaussianBlur in="SourceAlpha" stdDeviation="2.5"/><feOffset dx="2" dy="3"/><feComponentTransfer><feFuncA type="linear" slope="0.55"/></feComponentTransfer><feMerge><feMergeNode/><feMergeNode in="SourceGraphic"/></feMerge></filter></defs>
<g filter="url(#ds)">
<rect x="18.5" y="797.5" width="596" height="284" fill="none" stroke="#b3152a" stroke-width="7"/>
<path d="M382.2 283.5 L89.9 772.8" stroke="#b3152a" stroke-width="10" stroke-dasharray="29.7 10.2" stroke-dashoffset="3.4" stroke-linecap="butt" fill="none"/>
<circle cx="382.2" cy="283.5" r="5" fill="#b3152a"/>
<path d="M77.3 794 L78.6 760.8 L105 775.8Z" fill="#b3152a"/>
</g></svg>
<svg class="a" style="left:0;top:0;z-index:20" width="2548" height="1283"><defs><filter id="tsh" x="-5%" y="-50%" width="110%" height="200%"><feGaussianBlur stdDeviation="1.2"/></filter></defs><path d="M0 1283 L0.0 1250.3 L3.4 1251.3 L6.8 1251.4 L10.2 1250.8 L13.6 1257.8 L17.0 1263.2 L20.4 1269.4 L24.2 1270.1 L28.0 1270.7 L31.4 1268.1 L34.9 1263.9 L38.3 1260.5 L41.5 1259.4 L44.6 1260.6 L47.8 1259.5 L51.0 1259.2 L54.4 1259.4 L57.8 1258.7 L61.2 1259.7 L65.0 1263.0 L68.9 1268.7 L72.7 1272.0 L76.5 1271.9 L80.4 1270.3 L84.2 1269.4 L87.4 1268.9 L90.6 1269.3 L93.8 1269.6 L97.0 1270.7 L100.2 1266.7 L103.3 1264.3 L106.5 1261.2 L109.7 1258.0 L112.9 1256.4 L116.1 1257.2 L119.2 1255.7 L122.4 1254.9 L125.8 1256.3 L129.3 1256.1 L132.7 1256.7 L135.8 1260.9 L139.0 1265.1 L142.8 1261.9 L146.7 1259.4 L150.5 1255.4 L153.6 1254.7 L156.6 1254.8 L159.7 1256.5 L162.7 1255.8 L165.8 1255.9 L169.6 1255.7 L173.5 1253.1 L177.3 1252.9 L180.5 1256.0 L183.7 1259.0 L186.8 1262.0 L190.0 1265.1 L193.8 1265.7 L197.7 1265.5 L201.5 1266.9 L205.3 1261.7 L209.2 1258.0 L212.4 1257.8 L215.6 1260.0 L218.8 1259.1 L222.0 1260.5 L225.0 1260.3 L228.0 1260.9 L231.0 1259.2 L234.0 1259.0 L237.0 1258.8 L240.1 1259.4 L243.1 1259.2 L246.1 1258.2 L249.1 1259.7 L252.1 1259.5 L255.1 1258.5 L260.2 1256.7 L263.4 1257.5 L266.6 1257.5 L269.8 1255.9 L273.0 1256.7 L276.1 1257.2 L279.1 1257.7 L282.2 1258.2 L285.2 1257.9 L288.3 1259.2 L291.4 1262.0 L294.4 1264.8 L297.5 1266.9 L300.5 1271.3 L303.6 1273.3 L307.2 1270.2 L310.7 1268.7 L314.3 1266.4 L317.8 1263.3 L321.4 1261.8 L324.8 1264.0 L328.2 1266.9 L331.6 1270.7 L335.5 1266.6 L339.3 1261.0 L342.9 1261.7 L346.4 1260.8 L350.0 1260.7 L353.5 1261.4 L357.1 1260.5 L360.1 1260.8 L363.1 1261.2 L366.2 1262.3 L369.2 1262.7 L372.2 1261.4 L375.2 1263.4 L378.2 1263.7 L381.2 1263.3 L384.3 1262.8 L387.3 1264.0 L390.3 1264.3 L393.7 1264.3 L397.1 1263.5 L400.5 1264.3 L404.9 1260.5 L409.4 1256.7 L412.4 1259.5 L415.4 1263.1 L418.4 1265.1 L422.2 1261.4 L426.0 1259.2 L429.2 1257.5 L432.4 1257.3 L435.6 1256.4 L438.8 1255.4 L442.2 1259.4 L445.6 1261.9 L449.0 1265.1 L452.3 1264.3 L455.6 1265.1 L458.9 1265.1 L462.1 1265.9 L465.4 1264.3 L468.7 1264.3 L472.0 1265.1 L475.3 1264.4 L478.5 1265.2 L481.8 1265.3 L485.1 1264.6 L488.4 1265.5 L491.6 1265.5 L494.9 1265.6 L498.0 1265.9 L501.0 1264.6 L504.1 1264.9 L507.1 1263.6 L510.2 1263.1 L513.3 1263.9 L516.4 1263.1 L519.6 1263.1 L522.7 1263.1 L525.8 1263.1 L528.9 1263.1 L532.1 1263.1 L535.2 1263.1 L538.3 1263.1 L542.1 1260.4 L545.9 1258.4 L549.7 1254.9 L553.0 1258.1 L556.3 1258.9 L559.7 1262.9 L563.0 1263.7 L566.3 1266.9 L569.9 1265.3 L573.5 1264.6 L577.0 1263.8 L580.6 1263.9 L584.2 1263.1 L587.5 1263.1 L590.7 1263.9 L594.0 1263.1 L597.3 1263.9 L600.6 1263.9 L603.8 1263.1 L607.1 1263.1 L610.7 1262.4 L614.3 1260.9 L617.8 1261.1 L621.4 1260.4 L625.0 1259.7 L628.4 1260.8 L631.8 1259.4 L635.2 1260.5 L638.9 1258.3 L642.6 1256.0 L646.3 1253.8 L650.0 1251.6 L653.2 1252.7 L656.4 1254.6 L659.6 1257.3 L662.8 1259.2 L666.0 1259.0 L669.1 1258.1 L672.3 1256.4 L675.5 1255.4 L678.6 1257.2 L681.6 1259.7 L684.7 1263.1 L687.7 1265.6 L690.8 1268.2 L693.9 1267.9 L697.0 1267.6 L700.2 1266.5 L703.3 1267.0 L706.4 1266.8 L709.5 1267.3 L712.7 1266.2 L715.8 1265.9 L718.9 1265.6 L722.1 1262.2 L725.2 1259.7 L728.4 1258.8 L731.6 1255.4 L735.0 1255.7 L738.4 1256.1 L741.8 1255.6 L745.2 1255.9 L748.6 1256.3 L752.0 1257.4 L755.4 1260.9 L758.8 1262.1 L762.2 1265.6 L765.6 1266.2 L769.0 1266.9 L772.5 1267.5 L775.9 1267.3 L779.3 1268.0 L782.7 1269.4 L785.8 1268.2 L788.8 1265.3 L791.9 1262.5 L794.9 1261.2 L798.0 1259.2 L801.1 1258.4 L804.1 1257.7 L807.2 1256.1 L810.2 1257.0 L813.3 1255.4 L816.4 1255.0 L819.4 1257.0 L822.5 1255.8 L825.5 1257.8 L828.6 1257.4 L831.7 1258.2 L834.7 1261.5 L837.8 1263.1 L840.8 1263.2 L843.9 1265.6 L847.0 1263.9 L850.0 1263.0 L853.1 1262.0 L856.1 1261.1 L859.2 1261.0 L862.8 1260.7 L866.3 1261.3 L869.9 1260.2 L873.4 1260.8 L877.0 1259.7 L880.2 1262.6 L883.4 1264.8 L886.6 1266.9 L889.8 1268.2 L892.9 1267.3 L896.1 1267.2 L899.2 1267.9 L902.4 1267.0 L905.5 1268.5 L908.6 1266.8 L911.8 1267.5 L914.9 1266.6 L918.0 1268.1 L921.2 1268.0 L924.3 1267.1 L927.5 1266.2 L930.6 1266.9 L933.6 1266.9 L936.6 1266.9 L939.6 1266.9 L942.6 1266.9 L945.6 1266.9 L948.6 1266.9 L951.6 1267.7 L954.6 1267.7 L957.6 1266.9 L960.6 1266.9 L963.6 1267.7 L966.6 1266.9 L969.6 1266.9 L972.6 1267.7 L975.6 1266.9 L978.6 1266.9 L981.6 1266.9 L984.8 1267.2 L988.0 1266.0 L991.2 1265.5 L994.4 1265.0 L997.5 1264.5 L1000.7 1264.0 L1003.9 1264.4 L1007.1 1263.1 L1010.3 1263.1 L1013.5 1262.3 L1016.7 1262.3 L1019.9 1263.1 L1023.1 1263.1 L1026.2 1262.3 L1029.4 1263.9 L1032.6 1263.9 L1035.8 1263.1 L1039.0 1263.1 L1042.2 1263.9 L1045.4 1263.1 L1048.8 1263.0 L1052.2 1262.2 L1055.6 1260.5 L1058.9 1261.4 L1062.2 1263.1 L1065.5 1263.2 L1068.7 1263.4 L1072.0 1264.3 L1075.3 1266.0 L1078.6 1266.9 L1081.7 1263.8 L1084.7 1262.3 L1087.8 1260.0 L1090.8 1257.7 L1093.9 1255.4 L1097.5 1257.4 L1101.0 1261.0 L1104.6 1264.6 L1108.1 1267.4 L1111.7 1269.4 L1115.3 1267.2 L1118.9 1264.2 L1122.4 1262.9 L1126.0 1260.7 L1129.6 1258.5 L1133.0 1258.5 L1136.4 1257.7 L1139.8 1258.5 L1143.2 1261.3 L1146.6 1266.6 L1150.0 1269.4 L1153.4 1263.1 L1156.8 1258.4 L1160.2 1252.9 L1163.3 1252.0 L1166.4 1252.6 L1169.6 1252.5 L1172.7 1253.1 L1175.8 1252.2 L1178.9 1252.0 L1182.1 1251.1 L1185.2 1252.5 L1188.3 1251.6 L1191.7 1254.2 L1195.1 1258.4 L1198.5 1261.8 L1201.9 1265.2 L1205.3 1268.6 L1208.7 1272.0 L1212.3 1270.0 L1215.8 1268.7 L1219.4 1265.9 L1222.9 1263.0 L1226.5 1261.8 L1229.6 1262.7 L1232.6 1262.8 L1235.7 1262.0 L1238.7 1262.9 L1241.8 1263.0 L1244.9 1262.3 L1247.9 1261.6 L1251.0 1263.2 L1254.0 1262.5 L1257.1 1262.6 L1260.3 1260.6 L1263.5 1257.1 L1266.7 1254.3 L1269.9 1251.6 L1273.5 1250.3 L1277.1 1249.8 L1280.6 1250.0 L1284.2 1249.5 L1287.8 1249.0 L1290.8 1249.5 L1293.9 1247.6 L1297.0 1248.1 L1300.0 1247.8 L1303.1 1249.8 L1306.1 1251.9 L1309.2 1253.1 L1312.2 1256.0 L1315.3 1258.0 L1318.9 1258.0 L1322.5 1258.7 L1326.0 1261.1 L1329.6 1261.0 L1333.2 1261.8 L1336.3 1262.2 L1339.3 1261.0 L1342.4 1261.3 L1345.4 1259.3 L1348.5 1259.7 L1351.7 1262.0 L1354.9 1263.4 L1358.0 1267.3 L1361.2 1268.0 L1364.4 1271.0 L1367.6 1273.3 L1371.1 1270.1 L1374.6 1266.9 L1378.1 1264.5 L1381.6 1260.5 L1385.0 1260.5 L1388.4 1261.3 L1391.8 1261.3 L1395.2 1259.7 L1398.6 1260.5 L1402.0 1260.5 L1405.8 1265.8 L1409.7 1269.4 L1413.1 1263.5 L1416.5 1257.5 L1419.9 1251.6 L1423.1 1253.6 L1426.3 1255.7 L1429.5 1258.5 L1432.7 1259.7 L1436.1 1259.6 L1439.5 1259.5 L1442.9 1259.5 L1446.3 1259.4 L1449.7 1260.1 L1453.1 1259.2 L1456.2 1259.4 L1459.2 1260.5 L1462.3 1259.1 L1465.3 1259.3 L1468.4 1261.1 L1471.5 1259.8 L1474.5 1260.0 L1477.6 1261.8 L1480.6 1260.4 L1483.7 1262.3 L1486.8 1260.9 L1489.8 1261.9 L1492.9 1261.3 L1495.9 1263.2 L1499.0 1262.6 L1502.4 1262.4 L1505.8 1261.4 L1509.2 1259.7 L1512.6 1258.7 L1516.0 1258.5 L1519.4 1256.7 L1522.6 1259.7 L1525.8 1261.2 L1528.9 1263.4 L1532.1 1265.6 L1535.3 1266.5 L1538.5 1266.6 L1541.7 1265.9 L1544.9 1265.2 L1548.1 1266.1 L1551.2 1267.0 L1554.4 1265.6 L1557.6 1266.5 L1560.8 1266.6 L1564.0 1265.9 L1567.2 1266.0 L1570.4 1266.9 L1573.8 1263.9 L1577.2 1261.0 L1580.6 1258.0 L1583.8 1258.1 L1587.1 1257.4 L1590.3 1258.3 L1593.6 1258.4 L1596.8 1258.5 L1600.1 1258.7 L1603.3 1259.6 L1606.6 1258.1 L1609.8 1259.8 L1613.1 1258.3 L1616.3 1259.2 L1620.2 1265.6 L1623.7 1262.7 L1627.2 1259.8 L1630.7 1257.8 L1634.2 1254.1 L1637.8 1254.1 L1641.3 1256.5 L1644.9 1257.2 L1648.4 1257.2 L1652.0 1258.0 L1655.5 1260.5 L1659.0 1263.1 L1662.6 1265.7 L1666.1 1268.2 L1669.6 1265.0 L1673.1 1261.8 L1676.6 1258.6 L1680.1 1255.4 L1683.2 1255.4 L1686.2 1255.4 L1689.3 1255.4 L1692.3 1255.4 L1695.4 1255.4 L1698.5 1255.4 L1701.5 1254.6 L1704.6 1255.4 L1707.6 1255.4 L1710.7 1255.4 L1714.6 1259.2 L1718.4 1263.1 L1721.4 1262.2 L1724.4 1262.9 L1727.4 1263.5 L1730.4 1261.8 L1733.4 1263.3 L1736.5 1263.2 L1739.5 1262.3 L1742.5 1262.2 L1745.5 1262.8 L1748.5 1261.1 L1751.5 1261.8 L1755.3 1257.8 L1759.2 1255.4 L1763.0 1259.8 L1766.8 1264.3 L1770.0 1264.8 L1773.2 1265.2 L1776.4 1264.8 L1779.6 1266.1 L1783.0 1263.4 L1786.4 1260.7 L1789.8 1258.0 L1793.2 1259.7 L1796.6 1263.9 L1800.0 1265.6 L1803.2 1261.0 L1806.4 1258.0 L1809.4 1257.2 L1812.5 1257.2 L1815.5 1258.8 L1818.5 1258.0 L1821.5 1258.0 L1824.5 1258.0 L1827.6 1257.2 L1830.6 1258.0 L1834.0 1255.0 L1837.4 1252.0 L1840.8 1249.0 L1844.2 1255.4 L1847.6 1261.8 L1851.0 1268.2 L1854.4 1268.0 L1857.8 1268.6 L1861.2 1270.0 L1864.3 1269.9 L1867.5 1270.5 L1870.6 1268.8 L1873.8 1268.6 L1876.9 1269.3 L1880.0 1270.0 L1883.2 1269.8 L1886.3 1269.7 L1889.4 1268.8 L1892.6 1269.4 L1895.7 1268.5 L1898.9 1268.3 L1902.0 1268.2 L1905.4 1264.4 L1908.8 1261.4 L1912.2 1259.2 L1915.6 1259.3 L1919.0 1259.4 L1922.5 1260.2 L1925.9 1260.3 L1929.3 1259.6 L1932.7 1259.7 L1936.2 1261.3 L1939.6 1263.7 L1943.1 1264.5 L1946.5 1266.1 L1950.0 1267.7 L1953.1 1263.8 L1956.3 1260.8 L1959.4 1258.5 L1963.3 1257.7 L1967.2 1256.1 L1971.1 1256.1 L1974.1 1257.1 L1977.2 1256.6 L1980.2 1256.8 L1983.2 1257.1 L1986.2 1257.3 L1989.3 1256.8 L1992.3 1257.8 L1995.8 1261.5 L1999.3 1266.1 L2002.8 1269.0 L2006.3 1267.8 L2009.9 1266.7 L2013.4 1265.5 L2018.1 1259.6 L2021.6 1260.2 L2025.2 1261.6 L2028.7 1261.4 L2032.2 1262.0 L2035.7 1266.3 L2039.2 1269.0 L2042.3 1265.9 L2045.5 1262.7 L2048.6 1259.6 L2052.1 1258.8 L2055.6 1259.6 L2059.2 1259.6 L2062.7 1259.6 L2066.2 1261.6 L2069.8 1261.1 L2073.3 1262.3 L2076.8 1264.3 L2080.3 1260.8 L2083.8 1256.5 L2087.3 1253.8 L2090.8 1250.3 L2094.3 1250.5 L2097.9 1250.8 L2101.4 1251.0 L2104.9 1256.6 L2108.5 1262.3 L2112.0 1267.9 L2115.3 1268.9 L2118.6 1268.3 L2121.8 1267.8 L2125.1 1269.6 L2128.4 1269.0 L2131.6 1269.9 L2134.8 1269.2 L2138.1 1268.5 L2141.3 1270.1 L2144.5 1268.6 L2147.8 1268.7 L2151.0 1268.8 L2154.2 1269.7 L2157.5 1267.5 L2160.8 1265.2 L2164.1 1263.8 L2167.4 1261.5 L2170.7 1258.5 L2174.2 1261.6 L2177.7 1266.3 L2181.2 1270.2 L2184.7 1271.6 L2188.3 1270.7 L2191.8 1272.1 L2194.9 1268.7 L2198.1 1266.9 L2201.2 1264.3 L2204.5 1264.5 L2207.8 1264.7 L2211.1 1264.9 L2214.5 1265.9 L2217.8 1264.5 L2221.1 1265.5 L2224.2 1263.2 L2227.4 1258.4 L2230.5 1256.1 L2233.6 1258.3 L2236.8 1262.8 L2239.9 1265.0 L2243.4 1262.0 L2247.0 1259.9 L2250.5 1256.1 L2254.0 1257.2 L2257.6 1256.7 L2261.1 1257.8 L2264.6 1257.3 L2269.2 1265.5 L2272.3 1261.7 L2275.5 1260.4 L2278.6 1256.6 L2281.7 1257.5 L2284.9 1257.6 L2288.0 1256.9 L2291.1 1257.8 L2294.3 1257.1 L2297.4 1257.2 L2300.5 1257.3 L2303.7 1258.2 L2306.8 1257.5 L2309.9 1257.6 L2313.1 1257.7 L2316.2 1257.8 L2319.7 1259.8 L2323.2 1262.6 L2326.8 1266.2 L2330.3 1269.0 L2333.8 1265.7 L2337.4 1264.0 L2340.9 1262.2 L2344.4 1258.9 L2347.5 1259.6 L2350.5 1257.9 L2353.6 1258.6 L2356.7 1259.4 L2359.7 1257.7 L2362.8 1258.4 L2365.9 1257.5 L2369.0 1258.2 L2372.0 1258.9 L2375.1 1258.9 L2378.2 1258.0 L2381.2 1257.9 L2384.3 1257.8 L2387.6 1256.2 L2390.9 1255.4 L2394.1 1256.2 L2397.4 1254.6 L2400.7 1253.8 L2403.8 1256.8 L2407.0 1258.9 L2410.1 1262.7 L2413.3 1261.9 L2416.5 1263.5 L2419.7 1263.5 L2422.8 1261.9 L2426.0 1262.7 L2429.2 1261.9 L2432.4 1262.7 L2435.6 1262.7 L2438.8 1261.9 L2442.0 1262.7 L2445.1 1263.5 L2448.3 1262.7 L2451.5 1263.5 L2454.7 1262.7 L2458.6 1260.1 L2462.5 1256.0 L2466.4 1252.6 L2469.5 1253.6 L2472.7 1253.1 L2475.8 1253.3 L2479.4 1258.8 L2482.9 1264.3 L2486.0 1264.0 L2489.0 1263.8 L2492.1 1263.5 L2495.2 1264.0 L2498.2 1262.2 L2501.3 1262.7 L2504.4 1262.4 L2507.5 1262.1 L2510.5 1261.9 L2513.6 1261.6 L2516.7 1261.3 L2519.7 1261.1 L2522.8 1260.8 L2526.7 1262.0 L2530.6 1263.1 L2534.5 1264.3 L2539.2 1269.7 L2545.0 1269.0 L2545 1283Z" fill="#fff"/><path d="M0 1248 L0.0 1250.3 L3.4 1251.3 L6.8 1251.4 L10.2 1250.8 L13.6 1257.8 L17.0 1263.2 L20.4 1269.4 L24.2 1270.1 L28.0 1270.7 L31.4 1268.1 L34.9 1263.9 L38.3 1260.5 L41.5 1259.4 L44.6 1260.6 L47.8 1259.5 L51.0 1259.2 L54.4 1259.4 L57.8 1258.7 L61.2 1259.7 L65.0 1263.0 L68.9 1268.7 L72.7 1272.0 L76.5 1271.9 L80.4 1270.3 L84.2 1269.4 L87.4 1268.9 L90.6 1269.3 L93.8 1269.6 L97.0 1270.7 L100.2 1266.7 L103.3 1264.3 L106.5 1261.2 L109.7 1258.0 L112.9 1256.4 L116.1 1257.2 L119.2 1255.7 L122.4 1254.9 L125.8 1256.3 L129.3 1256.1 L132.7 1256.7 L135.8 1260.9 L139.0 1265.1 L142.8 1261.9 L146.7 1259.4 L150.5 1255.4 L153.6 1254.7 L156.6 1254.8 L159.7 1256.5 L162.7 1255.8 L165.8 1255.9 L169.6 1255.7 L173.5 1253.1 L177.3 1252.9 L180.5 1256.0 L183.7 1259.0 L186.8 1262.0 L190.0 1265.1 L193.8 1265.7 L197.7 1265.5 L201.5 1266.9 L205.3 1261.7 L209.2 1258.0 L212.4 1257.8 L215.6 1260.0 L218.8 1259.1 L222.0 1260.5 L225.0 1260.3 L228.0 1260.9 L231.0 1259.2 L234.0 1259.0 L237.0 1258.8 L240.1 1259.4 L243.1 1259.2 L246.1 1258.2 L249.1 1259.7 L252.1 1259.5 L255.1 1258.5 L260.2 1256.7 L263.4 1257.5 L266.6 1257.5 L269.8 1255.9 L273.0 1256.7 L276.1 1257.2 L279.1 1257.7 L282.2 1258.2 L285.2 1257.9 L288.3 1259.2 L291.4 1262.0 L294.4 1264.8 L297.5 1266.9 L300.5 1271.3 L303.6 1273.3 L307.2 1270.2 L310.7 1268.7 L314.3 1266.4 L317.8 1263.3 L321.4 1261.8 L324.8 1264.0 L328.2 1266.9 L331.6 1270.7 L335.5 1266.6 L339.3 1261.0 L342.9 1261.7 L346.4 1260.8 L350.0 1260.7 L353.5 1261.4 L357.1 1260.5 L360.1 1260.8 L363.1 1261.2 L366.2 1262.3 L369.2 1262.7 L372.2 1261.4 L375.2 1263.4 L378.2 1263.7 L381.2 1263.3 L384.3 1262.8 L387.3 1264.0 L390.3 1264.3 L393.7 1264.3 L397.1 1263.5 L400.5 1264.3 L404.9 1260.5 L409.4 1256.7 L412.4 1259.5 L415.4 1263.1 L418.4 1265.1 L422.2 1261.4 L426.0 1259.2 L429.2 1257.5 L432.4 1257.3 L435.6 1256.4 L438.8 1255.4 L442.2 1259.4 L445.6 1261.9 L449.0 1265.1 L452.3 1264.3 L455.6 1265.1 L458.9 1265.1 L462.1 1265.9 L465.4 1264.3 L468.7 1264.3 L472.0 1265.1 L475.3 1264.4 L478.5 1265.2 L481.8 1265.3 L485.1 1264.6 L488.4 1265.5 L491.6 1265.5 L494.9 1265.6 L498.0 1265.9 L501.0 1264.6 L504.1 1264.9 L507.1 1263.6 L510.2 1263.1 L513.3 1263.9 L516.4 1263.1 L519.6 1263.1 L522.7 1263.1 L525.8 1263.1 L528.9 1263.1 L532.1 1263.1 L535.2 1263.1 L538.3 1263.1 L542.1 1260.4 L545.9 1258.4 L549.7 1254.9 L553.0 1258.1 L556.3 1258.9 L559.7 1262.9 L563.0 1263.7 L566.3 1266.9 L569.9 1265.3 L573.5 1264.6 L577.0 1263.8 L580.6 1263.9 L584.2 1263.1 L587.5 1263.1 L590.7 1263.9 L594.0 1263.1 L597.3 1263.9 L600.6 1263.9 L603.8 1263.1 L607.1 1263.1 L610.7 1262.4 L614.3 1260.9 L617.8 1261.1 L621.4 1260.4 L625.0 1259.7 L628.4 1260.8 L631.8 1259.4 L635.2 1260.5 L638.9 1258.3 L642.6 1256.0 L646.3 1253.8 L650.0 1251.6 L653.2 1252.7 L656.4 1254.6 L659.6 1257.3 L662.8 1259.2 L666.0 1259.0 L669.1 1258.1 L672.3 1256.4 L675.5 1255.4 L678.6 1257.2 L681.6 1259.7 L684.7 1263.1 L687.7 1265.6 L690.8 1268.2 L693.9 1267.9 L697.0 1267.6 L700.2 1266.5 L703.3 1267.0 L706.4 1266.8 L709.5 1267.3 L712.7 1266.2 L715.8 1265.9 L718.9 1265.6 L722.1 1262.2 L725.2 1259.7 L728.4 1258.8 L731.6 1255.4 L735.0 1255.7 L738.4 1256.1 L741.8 1255.6 L745.2 1255.9 L748.6 1256.3 L752.0 1257.4 L755.4 1260.9 L758.8 1262.1 L762.2 1265.6 L765.6 1266.2 L769.0 1266.9 L772.5 1267.5 L775.9 1267.3 L779.3 1268.0 L782.7 1269.4 L785.8 1268.2 L788.8 1265.3 L791.9 1262.5 L794.9 1261.2 L798.0 1259.2 L801.1 1258.4 L804.1 1257.7 L807.2 1256.1 L810.2 1257.0 L813.3 1255.4 L816.4 1255.0 L819.4 1257.0 L822.5 1255.8 L825.5 1257.8 L828.6 1257.4 L831.7 1258.2 L834.7 1261.5 L837.8 1263.1 L840.8 1263.2 L843.9 1265.6 L847.0 1263.9 L850.0 1263.0 L853.1 1262.0 L856.1 1261.1 L859.2 1261.0 L862.8 1260.7 L866.3 1261.3 L869.9 1260.2 L873.4 1260.8 L877.0 1259.7 L880.2 1262.6 L883.4 1264.8 L886.6 1266.9 L889.8 1268.2 L892.9 1267.3 L896.1 1267.2 L899.2 1267.9 L902.4 1267.0 L905.5 1268.5 L908.6 1266.8 L911.8 1267.5 L914.9 1266.6 L918.0 1268.1 L921.2 1268.0 L924.3 1267.1 L927.5 1266.2 L930.6 1266.9 L933.6 1266.9 L936.6 1266.9 L939.6 1266.9 L942.6 1266.9 L945.6 1266.9 L948.6 1266.9 L951.6 1267.7 L954.6 1267.7 L957.6 1266.9 L960.6 1266.9 L963.6 1267.7 L966.6 1266.9 L969.6 1266.9 L972.6 1267.7 L975.6 1266.9 L978.6 1266.9 L981.6 1266.9 L984.8 1267.2 L988.0 1266.0 L991.2 1265.5 L994.4 1265.0 L997.5 1264.5 L1000.7 1264.0 L1003.9 1264.4 L1007.1 1263.1 L1010.3 1263.1 L1013.5 1262.3 L1016.7 1262.3 L1019.9 1263.1 L1023.1 1263.1 L1026.2 1262.3 L1029.4 1263.9 L1032.6 1263.9 L1035.8 1263.1 L1039.0 1263.1 L1042.2 1263.9 L1045.4 1263.1 L1048.8 1263.0 L1052.2 1262.2 L1055.6 1260.5 L1058.9 1261.4 L1062.2 1263.1 L1065.5 1263.2 L1068.7 1263.4 L1072.0 1264.3 L1075.3 1266.0 L1078.6 1266.9 L1081.7 1263.8 L1084.7 1262.3 L1087.8 1260.0 L1090.8 1257.7 L1093.9 1255.4 L1097.5 1257.4 L1101.0 1261.0 L1104.6 1264.6 L1108.1 1267.4 L1111.7 1269.4 L1115.3 1267.2 L1118.9 1264.2 L1122.4 1262.9 L1126.0 1260.7 L1129.6 1258.5 L1133.0 1258.5 L1136.4 1257.7 L1139.8 1258.5 L1143.2 1261.3 L1146.6 1266.6 L1150.0 1269.4 L1153.4 1263.1 L1156.8 1258.4 L1160.2 1252.9 L1163.3 1252.0 L1166.4 1252.6 L1169.6 1252.5 L1172.7 1253.1 L1175.8 1252.2 L1178.9 1252.0 L1182.1 1251.1 L1185.2 1252.5 L1188.3 1251.6 L1191.7 1254.2 L1195.1 1258.4 L1198.5 1261.8 L1201.9 1265.2 L1205.3 1268.6 L1208.7 1272.0 L1212.3 1270.0 L1215.8 1268.7 L1219.4 1265.9 L1222.9 1263.0 L1226.5 1261.8 L1229.6 1262.7 L1232.6 1262.8 L1235.7 1262.0 L1238.7 1262.9 L1241.8 1263.0 L1244.9 1262.3 L1247.9 1261.6 L1251.0 1263.2 L1254.0 1262.5 L1257.1 1262.6 L1260.3 1260.6 L1263.5 1257.1 L1266.7 1254.3 L1269.9 1251.6 L1273.5 1250.3 L1277.1 1249.8 L1280.6 1250.0 L1284.2 1249.5 L1287.8 1249.0 L1290.8 1249.5 L1293.9 1247.6 L1297.0 1248.1 L1300.0 1247.8 L1303.1 1249.8 L1306.1 1251.9 L1309.2 1253.1 L1312.2 1256.0 L1315.3 1258.0 L1318.9 1258.0 L1322.5 1258.7 L1326.0 1261.1 L1329.6 1261.0 L1333.2 1261.8 L1336.3 1262.2 L1339.3 1261.0 L1342.4 1261.3 L1345.4 1259.3 L1348.5 1259.7 L1351.7 1262.0 L1354.9 1263.4 L1358.0 1267.3 L1361.2 1268.0 L1364.4 1271.0 L1367.6 1273.3 L1371.1 1270.1 L1374.6 1266.9 L1378.1 1264.5 L1381.6 1260.5 L1385.0 1260.5 L1388.4 1261.3 L1391.8 1261.3 L1395.2 1259.7 L1398.6 1260.5 L1402.0 1260.5 L1405.8 1265.8 L1409.7 1269.4 L1413.1 1263.5 L1416.5 1257.5 L1419.9 1251.6 L1423.1 1253.6 L1426.3 1255.7 L1429.5 1258.5 L1432.7 1259.7 L1436.1 1259.6 L1439.5 1259.5 L1442.9 1259.5 L1446.3 1259.4 L1449.7 1260.1 L1453.1 1259.2 L1456.2 1259.4 L1459.2 1260.5 L1462.3 1259.1 L1465.3 1259.3 L1468.4 1261.1 L1471.5 1259.8 L1474.5 1260.0 L1477.6 1261.8 L1480.6 1260.4 L1483.7 1262.3 L1486.8 1260.9 L1489.8 1261.9 L1492.9 1261.3 L1495.9 1263.2 L1499.0 1262.6 L1502.4 1262.4 L1505.8 1261.4 L1509.2 1259.7 L1512.6 1258.7 L1516.0 1258.5 L1519.4 1256.7 L1522.6 1259.7 L1525.8 1261.2 L1528.9 1263.4 L1532.1 1265.6 L1535.3 1266.5 L1538.5 1266.6 L1541.7 1265.9 L1544.9 1265.2 L1548.1 1266.1 L1551.2 1267.0 L1554.4 1265.6 L1557.6 1266.5 L1560.8 1266.6 L1564.0 1265.9 L1567.2 1266.0 L1570.4 1266.9 L1573.8 1263.9 L1577.2 1261.0 L1580.6 1258.0 L1583.8 1258.1 L1587.1 1257.4 L1590.3 1258.3 L1593.6 1258.4 L1596.8 1258.5 L1600.1 1258.7 L1603.3 1259.6 L1606.6 1258.1 L1609.8 1259.8 L1613.1 1258.3 L1616.3 1259.2 L1620.2 1265.6 L1623.7 1262.7 L1627.2 1259.8 L1630.7 1257.8 L1634.2 1254.1 L1637.8 1254.1 L1641.3 1256.5 L1644.9 1257.2 L1648.4 1257.2 L1652.0 1258.0 L1655.5 1260.5 L1659.0 1263.1 L1662.6 1265.7 L1666.1 1268.2 L1669.6 1265.0 L1673.1 1261.8 L1676.6 1258.6 L1680.1 1255.4 L1683.2 1255.4 L1686.2 1255.4 L1689.3 1255.4 L1692.3 1255.4 L1695.4 1255.4 L1698.5 1255.4 L1701.5 1254.6 L1704.6 1255.4 L1707.6 1255.4 L1710.7 1255.4 L1714.6 1259.2 L1718.4 1263.1 L1721.4 1262.2 L1724.4 1262.9 L1727.4 1263.5 L1730.4 1261.8 L1733.4 1263.3 L1736.5 1263.2 L1739.5 1262.3 L1742.5 1262.2 L1745.5 1262.8 L1748.5 1261.1 L1751.5 1261.8 L1755.3 1257.8 L1759.2 1255.4 L1763.0 1259.8 L1766.8 1264.3 L1770.0 1264.8 L1773.2 1265.2 L1776.4 1264.8 L1779.6 1266.1 L1783.0 1263.4 L1786.4 1260.7 L1789.8 1258.0 L1793.2 1259.7 L1796.6 1263.9 L1800.0 1265.6 L1803.2 1261.0 L1806.4 1258.0 L1809.4 1257.2 L1812.5 1257.2 L1815.5 1258.8 L1818.5 1258.0 L1821.5 1258.0 L1824.5 1258.0 L1827.6 1257.2 L1830.6 1258.0 L1834.0 1255.0 L1837.4 1252.0 L1840.8 1249.0 L1844.2 1255.4 L1847.6 1261.8 L1851.0 1268.2 L1854.4 1268.0 L1857.8 1268.6 L1861.2 1270.0 L1864.3 1269.9 L1867.5 1270.5 L1870.6 1268.8 L1873.8 1268.6 L1876.9 1269.3 L1880.0 1270.0 L1883.2 1269.8 L1886.3 1269.7 L1889.4 1268.8 L1892.6 1269.4 L1895.7 1268.5 L1898.9 1268.3 L1902.0 1268.2 L1905.4 1264.4 L1908.8 1261.4 L1912.2 1259.2 L1915.6 1259.3 L1919.0 1259.4 L1922.5 1260.2 L1925.9 1260.3 L1929.3 1259.6 L1932.7 1259.7 L1936.2 1261.3 L1939.6 1263.7 L1943.1 1264.5 L1946.5 1266.1 L1950.0 1267.7 L1953.1 1263.8 L1956.3 1260.8 L1959.4 1258.5 L1963.3 1257.7 L1967.2 1256.1 L1971.1 1256.1 L1974.1 1257.1 L1977.2 1256.6 L1980.2 1256.8 L1983.2 1257.1 L1986.2 1257.3 L1989.3 1256.8 L1992.3 1257.8 L1995.8 1261.5 L1999.3 1266.1 L2002.8 1269.0 L2006.3 1267.8 L2009.9 1266.7 L2013.4 1265.5 L2018.1 1259.6 L2021.6 1260.2 L2025.2 1261.6 L2028.7 1261.4 L2032.2 1262.0 L2035.7 1266.3 L2039.2 1269.0 L2042.3 1265.9 L2045.5 1262.7 L2048.6 1259.6 L2052.1 1258.8 L2055.6 1259.6 L2059.2 1259.6 L2062.7 1259.6 L2066.2 1261.6 L2069.8 1261.1 L2073.3 1262.3 L2076.8 1264.3 L2080.3 1260.8 L2083.8 1256.5 L2087.3 1253.8 L2090.8 1250.3 L2094.3 1250.5 L2097.9 1250.8 L2101.4 1251.0 L2104.9 1256.6 L2108.5 1262.3 L2112.0 1267.9 L2115.3 1268.9 L2118.6 1268.3 L2121.8 1267.8 L2125.1 1269.6 L2128.4 1269.0 L2131.6 1269.9 L2134.8 1269.2 L2138.1 1268.5 L2141.3 1270.1 L2144.5 1268.6 L2147.8 1268.7 L2151.0 1268.8 L2154.2 1269.7 L2157.5 1267.5 L2160.8 1265.2 L2164.1 1263.8 L2167.4 1261.5 L2170.7 1258.5 L2174.2 1261.6 L2177.7 1266.3 L2181.2 1270.2 L2184.7 1271.6 L2188.3 1270.7 L2191.8 1272.1 L2194.9 1268.7 L2198.1 1266.9 L2201.2 1264.3 L2204.5 1264.5 L2207.8 1264.7 L2211.1 1264.9 L2214.5 1265.9 L2217.8 1264.5 L2221.1 1265.5 L2224.2 1263.2 L2227.4 1258.4 L2230.5 1256.1 L2233.6 1258.3 L2236.8 1262.8 L2239.9 1265.0 L2243.4 1262.0 L2247.0 1259.9 L2250.5 1256.1 L2254.0 1257.2 L2257.6 1256.7 L2261.1 1257.8 L2264.6 1257.3 L2269.2 1265.5 L2272.3 1261.7 L2275.5 1260.4 L2278.6 1256.6 L2281.7 1257.5 L2284.9 1257.6 L2288.0 1256.9 L2291.1 1257.8 L2294.3 1257.1 L2297.4 1257.2 L2300.5 1257.3 L2303.7 1258.2 L2306.8 1257.5 L2309.9 1257.6 L2313.1 1257.7 L2316.2 1257.8 L2319.7 1259.8 L2323.2 1262.6 L2326.8 1266.2 L2330.3 1269.0 L2333.8 1265.7 L2337.4 1264.0 L2340.9 1262.2 L2344.4 1258.9 L2347.5 1259.6 L2350.5 1257.9 L2353.6 1258.6 L2356.7 1259.4 L2359.7 1257.7 L2362.8 1258.4 L2365.9 1257.5 L2369.0 1258.2 L2372.0 1258.9 L2375.1 1258.9 L2378.2 1258.0 L2381.2 1257.9 L2384.3 1257.8 L2387.6 1256.2 L2390.9 1255.4 L2394.1 1256.2 L2397.4 1254.6 L2400.7 1253.8 L2403.8 1256.8 L2407.0 1258.9 L2410.1 1262.7 L2413.3 1261.9 L2416.5 1263.5 L2419.7 1263.5 L2422.8 1261.9 L2426.0 1262.7 L2429.2 1261.9 L2432.4 1262.7 L2435.6 1262.7 L2438.8 1261.9 L2442.0 1262.7 L2445.1 1263.5 L2448.3 1262.7 L2451.5 1263.5 L2454.7 1262.7 L2458.6 1260.1 L2462.5 1256.0 L2466.4 1252.6 L2469.5 1253.6 L2472.7 1253.1 L2475.8 1253.3 L2479.4 1258.8 L2482.9 1264.3 L2486.0 1264.0 L2489.0 1263.8 L2492.1 1263.5 L2495.2 1264.0 L2498.2 1262.2 L2501.3 1262.7 L2504.4 1262.4 L2507.5 1262.1 L2510.5 1261.9 L2513.6 1261.6 L2516.7 1261.3 L2519.7 1261.1 L2522.8 1260.8 L2526.7 1262.0 L2530.6 1263.1 L2534.5 1264.3 L2539.2 1269.7 L2545.0 1269.0 L2545 1268" fill="none" stroke="#000" stroke-width="3" opacity="0.35" filter="url(#tsh)" transform="translate(1.5,2)"/><path d="M0 1248 L0.0 1250.3 L3.4 1251.3 L6.8 1251.4 L10.2 1250.8 L13.6 1257.8 L17.0 1263.2 L20.4 1269.4 L24.2 1270.1 L28.0 1270.7 L31.4 1268.1 L34.9 1263.9 L38.3 1260.5 L41.5 1259.4 L44.6 1260.6 L47.8 1259.5 L51.0 1259.2 L54.4 1259.4 L57.8 1258.7 L61.2 1259.7 L65.0 1263.0 L68.9 1268.7 L72.7 1272.0 L76.5 1271.9 L80.4 1270.3 L84.2 1269.4 L87.4 1268.9 L90.6 1269.3 L93.8 1269.6 L97.0 1270.7 L100.2 1266.7 L103.3 1264.3 L106.5 1261.2 L109.7 1258.0 L112.9 1256.4 L116.1 1257.2 L119.2 1255.7 L122.4 1254.9 L125.8 1256.3 L129.3 1256.1 L132.7 1256.7 L135.8 1260.9 L139.0 1265.1 L142.8 1261.9 L146.7 1259.4 L150.5 1255.4 L153.6 1254.7 L156.6 1254.8 L159.7 1256.5 L162.7 1255.8 L165.8 1255.9 L169.6 1255.7 L173.5 1253.1 L177.3 1252.9 L180.5 1256.0 L183.7 1259.0 L186.8 1262.0 L190.0 1265.1 L193.8 1265.7 L197.7 1265.5 L201.5 1266.9 L205.3 1261.7 L209.2 1258.0 L212.4 1257.8 L215.6 1260.0 L218.8 1259.1 L222.0 1260.5 L225.0 1260.3 L228.0 1260.9 L231.0 1259.2 L234.0 1259.0 L237.0 1258.8 L240.1 1259.4 L243.1 1259.2 L246.1 1258.2 L249.1 1259.7 L252.1 1259.5 L255.1 1258.5 L260.2 1256.7 L263.4 1257.5 L266.6 1257.5 L269.8 1255.9 L273.0 1256.7 L276.1 1257.2 L279.1 1257.7 L282.2 1258.2 L285.2 1257.9 L288.3 1259.2 L291.4 1262.0 L294.4 1264.8 L297.5 1266.9 L300.5 1271.3 L303.6 1273.3 L307.2 1270.2 L310.7 1268.7 L314.3 1266.4 L317.8 1263.3 L321.4 1261.8 L324.8 1264.0 L328.2 1266.9 L331.6 1270.7 L335.5 1266.6 L339.3 1261.0 L342.9 1261.7 L346.4 1260.8 L350.0 1260.7 L353.5 1261.4 L357.1 1260.5 L360.1 1260.8 L363.1 1261.2 L366.2 1262.3 L369.2 1262.7 L372.2 1261.4 L375.2 1263.4 L378.2 1263.7 L381.2 1263.3 L384.3 1262.8 L387.3 1264.0 L390.3 1264.3 L393.7 1264.3 L397.1 1263.5 L400.5 1264.3 L404.9 1260.5 L409.4 1256.7 L412.4 1259.5 L415.4 1263.1 L418.4 1265.1 L422.2 1261.4 L426.0 1259.2 L429.2 1257.5 L432.4 1257.3 L435.6 1256.4 L438.8 1255.4 L442.2 1259.4 L445.6 1261.9 L449.0 1265.1 L452.3 1264.3 L455.6 1265.1 L458.9 1265.1 L462.1 1265.9 L465.4 1264.3 L468.7 1264.3 L472.0 1265.1 L475.3 1264.4 L478.5 1265.2 L481.8 1265.3 L485.1 1264.6 L488.4 1265.5 L491.6 1265.5 L494.9 1265.6 L498.0 1265.9 L501.0 1264.6 L504.1 1264.9 L507.1 1263.6 L510.2 1263.1 L513.3 1263.9 L516.4 1263.1 L519.6 1263.1 L522.7 1263.1 L525.8 1263.1 L528.9 1263.1 L532.1 1263.1 L535.2 1263.1 L538.3 1263.1 L542.1 1260.4 L545.9 1258.4 L549.7 1254.9 L553.0 1258.1 L556.3 1258.9 L559.7 1262.9 L563.0 1263.7 L566.3 1266.9 L569.9 1265.3 L573.5 1264.6 L577.0 1263.8 L580.6 1263.9 L584.2 1263.1 L587.5 1263.1 L590.7 1263.9 L594.0 1263.1 L597.3 1263.9 L600.6 1263.9 L603.8 1263.1 L607.1 1263.1 L610.7 1262.4 L614.3 1260.9 L617.8 1261.1 L621.4 1260.4 L625.0 1259.7 L628.4 1260.8 L631.8 1259.4 L635.2 1260.5 L638.9 1258.3 L642.6 1256.0 L646.3 1253.8 L650.0 1251.6 L653.2 1252.7 L656.4 1254.6 L659.6 1257.3 L662.8 1259.2 L666.0 1259.0 L669.1 1258.1 L672.3 1256.4 L675.5 1255.4 L678.6 1257.2 L681.6 1259.7 L684.7 1263.1 L687.7 1265.6 L690.8 1268.2 L693.9 1267.9 L697.0 1267.6 L700.2 1266.5 L703.3 1267.0 L706.4 1266.8 L709.5 1267.3 L712.7 1266.2 L715.8 1265.9 L718.9 1265.6 L722.1 1262.2 L725.2 1259.7 L728.4 1258.8 L731.6 1255.4 L735.0 1255.7 L738.4 1256.1 L741.8 1255.6 L745.2 1255.9 L748.6 1256.3 L752.0 1257.4 L755.4 1260.9 L758.8 1262.1 L762.2 1265.6 L765.6 1266.2 L769.0 1266.9 L772.5 1267.5 L775.9 1267.3 L779.3 1268.0 L782.7 1269.4 L785.8 1268.2 L788.8 1265.3 L791.9 1262.5 L794.9 1261.2 L798.0 1259.2 L801.1 1258.4 L804.1 1257.7 L807.2 1256.1 L810.2 1257.0 L813.3 1255.4 L816.4 1255.0 L819.4 1257.0 L822.5 1255.8 L825.5 1257.8 L828.6 1257.4 L831.7 1258.2 L834.7 1261.5 L837.8 1263.1 L840.8 1263.2 L843.9 1265.6 L847.0 1263.9 L850.0 1263.0 L853.1 1262.0 L856.1 1261.1 L859.2 1261.0 L862.8 1260.7 L866.3 1261.3 L869.9 1260.2 L873.4 1260.8 L877.0 1259.7 L880.2 1262.6 L883.4 1264.8 L886.6 1266.9 L889.8 1268.2 L892.9 1267.3 L896.1 1267.2 L899.2 1267.9 L902.4 1267.0 L905.5 1268.5 L908.6 1266.8 L911.8 1267.5 L914.9 1266.6 L918.0 1268.1 L921.2 1268.0 L924.3 1267.1 L927.5 1266.2 L930.6 1266.9 L933.6 1266.9 L936.6 1266.9 L939.6 1266.9 L942.6 1266.9 L945.6 1266.9 L948.6 1266.9 L951.6 1267.7 L954.6 1267.7 L957.6 1266.9 L960.6 1266.9 L963.6 1267.7 L966.6 1266.9 L969.6 1266.9 L972.6 1267.7 L975.6 1266.9 L978.6 1266.9 L981.6 1266.9 L984.8 1267.2 L988.0 1266.0 L991.2 1265.5 L994.4 1265.0 L997.5 1264.5 L1000.7 1264.0 L1003.9 1264.4 L1007.1 1263.1 L1010.3 1263.1 L1013.5 1262.3 L1016.7 1262.3 L1019.9 1263.1 L1023.1 1263.1 L1026.2 1262.3 L1029.4 1263.9 L1032.6 1263.9 L1035.8 1263.1 L1039.0 1263.1 L1042.2 1263.9 L1045.4 1263.1 L1048.8 1263.0 L1052.2 1262.2 L1055.6 1260.5 L1058.9 1261.4 L1062.2 1263.1 L1065.5 1263.2 L1068.7 1263.4 L1072.0 1264.3 L1075.3 1266.0 L1078.6 1266.9 L1081.7 1263.8 L1084.7 1262.3 L1087.8 1260.0 L1090.8 1257.7 L1093.9 1255.4 L1097.5 1257.4 L1101.0 1261.0 L1104.6 1264.6 L1108.1 1267.4 L1111.7 1269.4 L1115.3 1267.2 L1118.9 1264.2 L1122.4 1262.9 L1126.0 1260.7 L1129.6 1258.5 L1133.0 1258.5 L1136.4 1257.7 L1139.8 1258.5 L1143.2 1261.3 L1146.6 1266.6 L1150.0 1269.4 L1153.4 1263.1 L1156.8 1258.4 L1160.2 1252.9 L1163.3 1252.0 L1166.4 1252.6 L1169.6 1252.5 L1172.7 1253.1 L1175.8 1252.2 L1178.9 1252.0 L1182.1 1251.1 L1185.2 1252.5 L1188.3 1251.6 L1191.7 1254.2 L1195.1 1258.4 L1198.5 1261.8 L1201.9 1265.2 L1205.3 1268.6 L1208.7 1272.0 L1212.3 1270.0 L1215.8 1268.7 L1219.4 1265.9 L1222.9 1263.0 L1226.5 1261.8 L1229.6 1262.7 L1232.6 1262.8 L1235.7 1262.0 L1238.7 1262.9 L1241.8 1263.0 L1244.9 1262.3 L1247.9 1261.6 L1251.0 1263.2 L1254.0 1262.5 L1257.1 1262.6 L1260.3 1260.6 L1263.5 1257.1 L1266.7 1254.3 L1269.9 1251.6 L1273.5 1250.3 L1277.1 1249.8 L1280.6 1250.0 L1284.2 1249.5 L1287.8 1249.0 L1290.8 1249.5 L1293.9 1247.6 L1297.0 1248.1 L1300.0 1247.8 L1303.1 1249.8 L1306.1 1251.9 L1309.2 1253.1 L1312.2 1256.0 L1315.3 1258.0 L1318.9 1258.0 L1322.5 1258.7 L1326.0 1261.1 L1329.6 1261.0 L1333.2 1261.8 L1336.3 1262.2 L1339.3 1261.0 L1342.4 1261.3 L1345.4 1259.3 L1348.5 1259.7 L1351.7 1262.0 L1354.9 1263.4 L1358.0 1267.3 L1361.2 1268.0 L1364.4 1271.0 L1367.6 1273.3 L1371.1 1270.1 L1374.6 1266.9 L1378.1 1264.5 L1381.6 1260.5 L1385.0 1260.5 L1388.4 1261.3 L1391.8 1261.3 L1395.2 1259.7 L1398.6 1260.5 L1402.0 1260.5 L1405.8 1265.8 L1409.7 1269.4 L1413.1 1263.5 L1416.5 1257.5 L1419.9 1251.6 L1423.1 1253.6 L1426.3 1255.7 L1429.5 1258.5 L1432.7 1259.7 L1436.1 1259.6 L1439.5 1259.5 L1442.9 1259.5 L1446.3 1259.4 L1449.7 1260.1 L1453.1 1259.2 L1456.2 1259.4 L1459.2 1260.5 L1462.3 1259.1 L1465.3 1259.3 L1468.4 1261.1 L1471.5 1259.8 L1474.5 1260.0 L1477.6 1261.8 L1480.6 1260.4 L1483.7 1262.3 L1486.8 1260.9 L1489.8 1261.9 L1492.9 1261.3 L1495.9 1263.2 L1499.0 1262.6 L1502.4 1262.4 L1505.8 1261.4 L1509.2 1259.7 L1512.6 1258.7 L1516.0 1258.5 L1519.4 1256.7 L1522.6 1259.7 L1525.8 1261.2 L1528.9 1263.4 L1532.1 1265.6 L1535.3 1266.5 L1538.5 1266.6 L1541.7 1265.9 L1544.9 1265.2 L1548.1 1266.1 L1551.2 1267.0 L1554.4 1265.6 L1557.6 1266.5 L1560.8 1266.6 L1564.0 1265.9 L1567.2 1266.0 L1570.4 1266.9 L1573.8 1263.9 L1577.2 1261.0 L1580.6 1258.0 L1583.8 1258.1 L1587.1 1257.4 L1590.3 1258.3 L1593.6 1258.4 L1596.8 1258.5 L1600.1 1258.7 L1603.3 1259.6 L1606.6 1258.1 L1609.8 1259.8 L1613.1 1258.3 L1616.3 1259.2 L1620.2 1265.6 L1623.7 1262.7 L1627.2 1259.8 L1630.7 1257.8 L1634.2 1254.1 L1637.8 1254.1 L1641.3 1256.5 L1644.9 1257.2 L1648.4 1257.2 L1652.0 1258.0 L1655.5 1260.5 L1659.0 1263.1 L1662.6 1265.7 L1666.1 1268.2 L1669.6 1265.0 L1673.1 1261.8 L1676.6 1258.6 L1680.1 1255.4 L1683.2 1255.4 L1686.2 1255.4 L1689.3 1255.4 L1692.3 1255.4 L1695.4 1255.4 L1698.5 1255.4 L1701.5 1254.6 L1704.6 1255.4 L1707.6 1255.4 L1710.7 1255.4 L1714.6 1259.2 L1718.4 1263.1 L1721.4 1262.2 L1724.4 1262.9 L1727.4 1263.5 L1730.4 1261.8 L1733.4 1263.3 L1736.5 1263.2 L1739.5 1262.3 L1742.5 1262.2 L1745.5 1262.8 L1748.5 1261.1 L1751.5 1261.8 L1755.3 1257.8 L1759.2 1255.4 L1763.0 1259.8 L1766.8 1264.3 L1770.0 1264.8 L1773.2 1265.2 L1776.4 1264.8 L1779.6 1266.1 L1783.0 1263.4 L1786.4 1260.7 L1789.8 1258.0 L1793.2 1259.7 L1796.6 1263.9 L1800.0 1265.6 L1803.2 1261.0 L1806.4 1258.0 L1809.4 1257.2 L1812.5 1257.2 L1815.5 1258.8 L1818.5 1258.0 L1821.5 1258.0 L1824.5 1258.0 L1827.6 1257.2 L1830.6 1258.0 L1834.0 1255.0 L1837.4 1252.0 L1840.8 1249.0 L1844.2 1255.4 L1847.6 1261.8 L1851.0 1268.2 L1854.4 1268.0 L1857.8 1268.6 L1861.2 1270.0 L1864.3 1269.9 L1867.5 1270.5 L1870.6 1268.8 L1873.8 1268.6 L1876.9 1269.3 L1880.0 1270.0 L1883.2 1269.8 L1886.3 1269.7 L1889.4 1268.8 L1892.6 1269.4 L1895.7 1268.5 L1898.9 1268.3 L1902.0 1268.2 L1905.4 1264.4 L1908.8 1261.4 L1912.2 1259.2 L1915.6 1259.3 L1919.0 1259.4 L1922.5 1260.2 L1925.9 1260.3 L1929.3 1259.6 L1932.7 1259.7 L1936.2 1261.3 L1939.6 1263.7 L1943.1 1264.5 L1946.5 1266.1 L1950.0 1267.7 L1953.1 1263.8 L1956.3 1260.8 L1959.4 1258.5 L1963.3 1257.7 L1967.2 1256.1 L1971.1 1256.1 L1974.1 1257.1 L1977.2 1256.6 L1980.2 1256.8 L1983.2 1257.1 L1986.2 1257.3 L1989.3 1256.8 L1992.3 1257.8 L1995.8 1261.5 L1999.3 1266.1 L2002.8 1269.0 L2006.3 1267.8 L2009.9 1266.7 L2013.4 1265.5 L2018.1 1259.6 L2021.6 1260.2 L2025.2 1261.6 L2028.7 1261.4 L2032.2 1262.0 L2035.7 1266.3 L2039.2 1269.0 L2042.3 1265.9 L2045.5 1262.7 L2048.6 1259.6 L2052.1 1258.8 L2055.6 1259.6 L2059.2 1259.6 L2062.7 1259.6 L2066.2 1261.6 L2069.8 1261.1 L2073.3 1262.3 L2076.8 1264.3 L2080.3 1260.8 L2083.8 1256.5 L2087.3 1253.8 L2090.8 1250.3 L2094.3 1250.5 L2097.9 1250.8 L2101.4 1251.0 L2104.9 1256.6 L2108.5 1262.3 L2112.0 1267.9 L2115.3 1268.9 L2118.6 1268.3 L2121.8 1267.8 L2125.1 1269.6 L2128.4 1269.0 L2131.6 1269.9 L2134.8 1269.2 L2138.1 1268.5 L2141.3 1270.1 L2144.5 1268.6 L2147.8 1268.7 L2151.0 1268.8 L2154.2 1269.7 L2157.5 1267.5 L2160.8 1265.2 L2164.1 1263.8 L2167.4 1261.5 L2170.7 1258.5 L2174.2 1261.6 L2177.7 1266.3 L2181.2 1270.2 L2184.7 1271.6 L2188.3 1270.7 L2191.8 1272.1 L2194.9 1268.7 L2198.1 1266.9 L2201.2 1264.3 L2204.5 1264.5 L2207.8 1264.7 L2211.1 1264.9 L2214.5 1265.9 L2217.8 1264.5 L2221.1 1265.5 L2224.2 1263.2 L2227.4 1258.4 L2230.5 1256.1 L2233.6 1258.3 L2236.8 1262.8 L2239.9 1265.0 L2243.4 1262.0 L2247.0 1259.9 L2250.5 1256.1 L2254.0 1257.2 L2257.6 1256.7 L2261.1 1257.8 L2264.6 1257.3 L2269.2 1265.5 L2272.3 1261.7 L2275.5 1260.4 L2278.6 1256.6 L2281.7 1257.5 L2284.9 1257.6 L2288.0 1256.9 L2291.1 1257.8 L2294.3 1257.1 L2297.4 1257.2 L2300.5 1257.3 L2303.7 1258.2 L2306.8 1257.5 L2309.9 1257.6 L2313.1 1257.7 L2316.2 1257.8 L2319.7 1259.8 L2323.2 1262.6 L2326.8 1266.2 L2330.3 1269.0 L2333.8 1265.7 L2337.4 1264.0 L2340.9 1262.2 L2344.4 1258.9 L2347.5 1259.6 L2350.5 1257.9 L2353.6 1258.6 L2356.7 1259.4 L2359.7 1257.7 L2362.8 1258.4 L2365.9 1257.5 L2369.0 1258.2 L2372.0 1258.9 L2375.1 1258.9 L2378.2 1258.0 L2381.2 1257.9 L2384.3 1257.8 L2387.6 1256.2 L2390.9 1255.4 L2394.1 1256.2 L2397.4 1254.6 L2400.7 1253.8 L2403.8 1256.8 L2407.0 1258.9 L2410.1 1262.7 L2413.3 1261.9 L2416.5 1263.5 L2419.7 1263.5 L2422.8 1261.9 L2426.0 1262.7 L2429.2 1261.9 L2432.4 1262.7 L2435.6 1262.7 L2438.8 1261.9 L2442.0 1262.7 L2445.1 1263.5 L2448.3 1262.7 L2451.5 1263.5 L2454.7 1262.7 L2458.6 1260.1 L2462.5 1256.0 L2466.4 1252.6 L2469.5 1253.6 L2472.7 1253.1 L2475.8 1253.3 L2479.4 1258.8 L2482.9 1264.3 L2486.0 1264.0 L2489.0 1263.8 L2492.1 1263.5 L2495.2 1264.0 L2498.2 1262.2 L2501.3 1262.7 L2504.4 1262.4 L2507.5 1262.1 L2510.5 1261.9 L2513.6 1261.6 L2516.7 1261.3 L2519.7 1261.1 L2522.8 1260.8 L2526.7 1262.0 L2530.6 1263.1 L2534.5 1264.3 L2539.2 1269.7 L2545.0 1269.0 L2545 1268" fill="none" stroke="#111" stroke-width="1.8"/></svg>
</body></html>
